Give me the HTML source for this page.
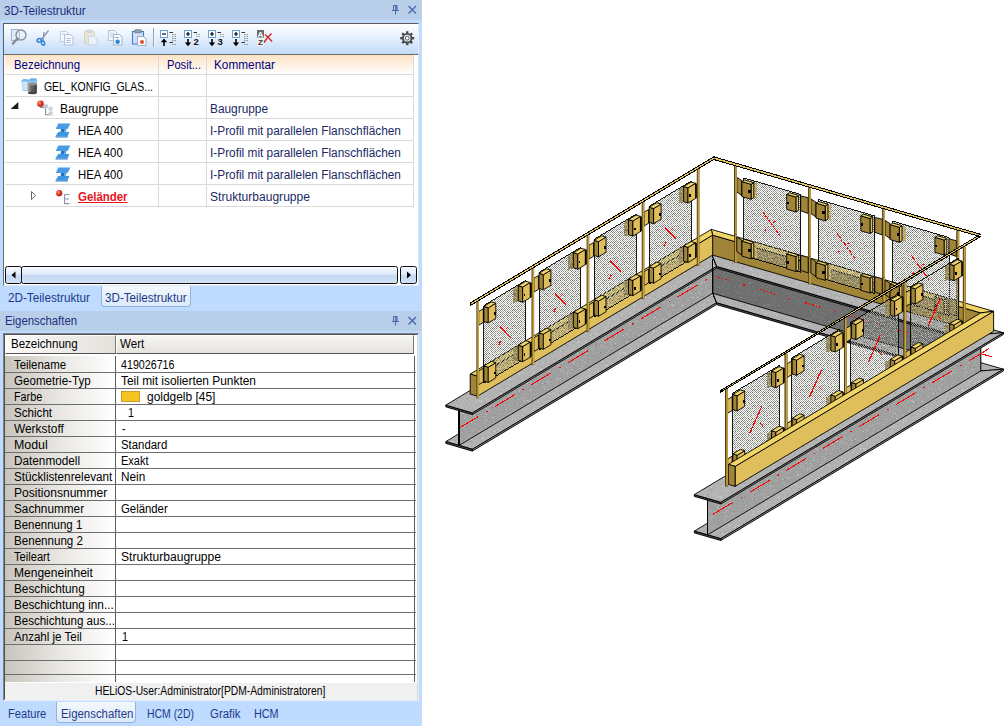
<!DOCTYPE html>
<html><head><meta charset="utf-8">
<style>
*{box-sizing:border-box;margin:0;padding:0}
html,body{width:1004px;height:726px;overflow:hidden;background:#fff}
body{font-family:"Liberation Sans",sans-serif;font-size:12px;color:#000;position:relative}
.abs{position:absolute}
#left{position:absolute;left:0;top:0;width:422px;height:726px;background:#bfdbff}
.tbar{position:absolute;left:0;width:422px;height:20px;background:#b9cee9;color:#1c2f80;font-size:12.2px;line-height:19px;padding-left:4px;white-space:nowrap}
.t{position:absolute;white-space:nowrap;line-height:14px;transform-origin:0 0}
.nv{color:#000080}
.dk{color:#1a2a66}
.hl{position:absolute;height:1px;background:#d9d9d9}
.vl{position:absolute;width:1px;background:#d9d9d9}
.gl{position:absolute;height:1px;background:#6e6e6e;left:5px;width:411px}
.pr{position:absolute;left:13px;font-size:12px;line-height:14px;white-space:nowrap;transform-origin:0 0;transform:scaleX(.93)}
.pv{position:absolute;left:121px;font-size:12px;line-height:14px;white-space:nowrap;transform-origin:0 0;transform:scaleX(.93)}
.tab{position:absolute;font-size:12px;line-height:14px;color:#1c3a8c;white-space:nowrap;transform-origin:0 0;transform:scaleX(.95)}
svg{position:absolute;left:0;top:0}
</style></head><body>
<div id="left">
<div class="abs" style="left:0;top:0;width:422px;height:1px;background:#d3e3f6"></div>
<div class="tbar" style="top:0"></div>
<div class="tbar" style="top:311px"></div>
<div class="t" style="left:4px;top:3.6px;color:#1c2f80;transform:scaleX(0.970);">3D-Teilestruktur</div>
<div class="t" style="left:4.5px;top:314px;color:#1c2f80;transform:scaleX(0.947);">Eigenschaften</div>
<svg class="abs" style="left:388px;top:0px" width="34" height="20" viewBox="0 0 34 20"><g fill="none" stroke="#4668b0" stroke-width="1.1"><path d="M5.5 5.5h3.5v5h-3.5z" stroke-width="1"/><path d="M8 5.5v5" stroke-width="1.6"/><path d="M4 10.5h7M7.5 10.5v4" stroke-width="1"/><path d="M20.5 6l7.5 7.5M28 6l-7.5 7.5" stroke-width="1.4"/></g></svg>
<svg class="abs" style="left:388px;top:311px" width="34" height="20" viewBox="0 0 34 20"><g fill="none" stroke="#4668b0" stroke-width="1.1"><path d="M5.5 5.5h3.5v5h-3.5z" stroke-width="1"/><path d="M8 5.5v5" stroke-width="1.6"/><path d="M4 10.5h7M7.5 10.5v4" stroke-width="1"/><path d="M20.5 6l7.5 7.5M28 6l-7.5 7.5" stroke-width="1.4"/></g></svg>
<div class="abs" style="left:3px;top:23px;width:416px;height:32px;border:1px solid #5a5a5a;border-right-color:#e8eef8;background:linear-gradient(#ffffff 0%,#eef5fe 30%,#c3dbf7 100%)"></div>
<div class="abs" style="left:3px;top:54px;width:416px;height:232px;background:#fff;border:1px solid #6a6a6a;border-right-color:#dfe8f4;border-bottom-color:#dfe8f4"></div>
<div class="abs" style="left:5px;top:55px;width:409px;height:19px;background:linear-gradient(#fde3c6 0%,#fef0e0 50%,#ffffff 100%)"></div>
<div class="hl" style="left:5px;top:74px;width:409px"></div>
<div class="hl" style="left:5px;top:96px;width:409px"></div>
<div class="hl" style="left:5px;top:118px;width:409px"></div>
<div class="hl" style="left:5px;top:140px;width:409px"></div>
<div class="hl" style="left:5px;top:162px;width:409px"></div>
<div class="hl" style="left:5px;top:184px;width:409px"></div>
<div class="hl" style="left:5px;top:206px;width:409px"></div>
<div class="vl" style="left:158px;top:56px;height:152px"></div>
<div class="vl" style="left:206px;top:56px;height:152px"></div>
<div class="vl" style="left:413px;top:56px;height:152px"></div>
<div class="t" style="left:14.4px;top:58px;color:#000080;transform:scaleX(0.951);">Bezeichnung</div>
<div class="t" style="left:166.9px;top:58px;color:#000080;transform:scaleX(0.927);">Posit...</div>
<div class="t" style="left:214.4px;top:58px;color:#000080;transform:scaleX(0.983);">Kommentar</div>
<div class="t" style="left:44.1px;top:80px;color:#000;transform:scaleX(0.869);">GEL_KONFIG_GLAS...</div>
<div class="t" style="left:60.1px;top:102px;color:#000;transform:scaleX(0.995);">Baugruppe</div>
<div class="t" style="left:210.2px;top:102px;color:#1a2a66;transform:scaleX(0.988);">Baugruppe</div>
<div class="t" style="left:78.3px;top:124px;color:#000;transform:scaleX(0.944);">HEA 400</div>
<div class="t" style="left:210px;top:124px;color:#1a2a66;transform:scaleX(0.987);">I-Profil mit parallelen Flanschflächen</div>
<div class="t" style="left:78.3px;top:146px;color:#000;transform:scaleX(0.944);">HEA 400</div>
<div class="t" style="left:210px;top:146px;color:#1a2a66;transform:scaleX(0.987);">I-Profil mit parallelen Flanschflächen</div>
<div class="t" style="left:78.3px;top:168px;color:#000;transform:scaleX(0.944);">HEA 400</div>
<div class="t" style="left:210px;top:168px;color:#1a2a66;transform:scaleX(0.987);">I-Profil mit parallelen Flanschflächen</div>
<div class="t" style="left:77.6px;top:190px;color:#e8141c;transform:scaleX(0.953);font-weight:bold;text-decoration:underline;">Geländer</div>
<div class="t" style="left:210px;top:190px;color:#1a2a66;transform:scaleX(1.006);">Strukturbaugruppe</div>
<svg class="abs" style="left:0px;top:98px" width="30" height="22"><path d="M18.3 4v7h-7.6z" fill="#1a1a1a"/></svg>
<svg class="abs" style="left:25px;top:186px" width="20" height="22"><path d="M6.5 5.5l4 4l-4 4z" fill="#fff" stroke="#666" stroke-width="1"/></svg>
<div class="abs" style="left:5px;top:266px;width:17px;height:18px;border:1px solid #111;border-radius:2.5px;background:linear-gradient(#f6f9fe,#dfeafa 45%,#c4d8f2 55%,#d3e2f6)"></div>
<div class="abs" style="left:21px;top:266px;width:377px;height:18px;border:1px solid #111;border-radius:2.5px;background:linear-gradient(#f6f9fe,#dfeafa 45%,#c4d8f2 55%,#d3e2f6)"></div>
<div class="abs" style="left:400px;top:266px;width:17px;height:18px;border:1px solid #111;border-radius:2.5px;background:linear-gradient(#f6f9fe,#dfeafa 45%,#c4d8f2 55%,#d3e2f6)"></div>
<svg class="abs" style="left:5px;top:266px" width="412" height="18"><path d="M10.5 5.5v7l-4-3.5z" fill="#000"/><path d="M402 5.5v7l4-3.5z" fill="#000"/></svg>
<div class="abs" style="left:101px;top:286px;width:90px;height:21px;background:linear-gradient(#f4f8fd,#dde9f8);border:1px solid #8fb4e3;border-top:none;border-radius:0 0 4px 4px"></div>
<div class="t" style="left:8px;top:290.5px;color:#1c3a8c;transform:scaleX(0.976);">2D-Teilestruktur</div>
<div class="t" style="left:104.5px;top:290.5px;color:#1c3a8c;transform:scaleX(0.970);">3D-Teilestruktur</div>
<div class="abs" style="left:3px;top:333px;width:416px;height:368px;background:#fff;border:1px solid #828282;border-right-color:#e6eefa;border-bottom-color:#e6eefa"></div>
<div class="abs" style="left:4px;top:334px;width:414px;height:366px;border:1px solid #505050;border-right-color:#d6d6d6;border-bottom-color:#d6d6d6"></div>
<div class="abs" style="left:5px;top:335px;width:111px;height:19px;background:linear-gradient(90deg,#fbfaf9,#e4e1dc);border:1px solid;border-color:#fff #777 #555 #fff"></div>
<div class="abs" style="left:116px;top:335px;width:298px;height:19px;background:linear-gradient(#f6f5f3,#e6e3de);border:1px solid;border-color:#fff #777 #555 #fff"></div>
<div class="t" style="left:10.6px;top:337px;color:#000;transform:scaleX(0.960);">Bezeichnung</div>
<div class="t" style="left:120.2px;top:337px;color:#000;transform:scaleX(0.963);">Wert</div>
<div class="abs" style="left:5px;top:356px;width:110px;height:326px;background:linear-gradient(90deg,#c9c5bd 0%,#e9e7e3 50%,#ffffff 100%)"></div>
<div class="abs" style="left:115px;top:356px;width:1px;height:326px;background:#5c5c5c"></div>
<div class="abs" style="left:414px;top:356px;width:1px;height:326px;background:#5c5c5c"></div>
<div class="gl" style="top:372px"></div>
<div class="t" style="left:13.7px;top:358px;color:#000;transform:scaleX(0.951);">Teilename</div>
<div class="t" style="left:121.3px;top:358px;color:#000;transform:scaleX(0.891);">419026716</div>
<div class="gl" style="top:388px"></div>
<div class="t" style="left:13.7px;top:374px;color:#000;transform:scaleX(0.966);">Geometrie-Typ</div>
<div class="t" style="left:121.3px;top:374px;color:#000;transform:scaleX(0.992);">Teil mit isolierten Punkten</div>
<div class="gl" style="top:404px"></div>
<div class="t" style="left:13.7px;top:390px;color:#000;transform:scaleX(0.899);">Farbe</div>
<div class="abs" style="left:121px;top:391px;width:19px;height:11px;background:#f7c321;border:1px solid #c8a030"></div>
<div class="t" style="left:146.6px;top:390px;color:#000;transform:scaleX(0.995);">goldgelb [45]</div>
<div class="gl" style="top:420px"></div>
<div class="t" style="left:13.7px;top:406px;color:#000;transform:scaleX(0.968);">Schicht</div>
<div class="t" style="left:127.5px;top:406px;color:#000;transform:scaleX(0.897);">1</div>
<div class="gl" style="top:436px"></div>
<div class="t" style="left:13.7px;top:422px;color:#000;transform:scaleX(0.991);">Werkstoff</div>
<div class="t" style="left:122px;top:422px;color:#000;transform:scaleX(0.875);">-</div>
<div class="gl" style="top:452px"></div>
<div class="t" style="left:13.7px;top:438px;color:#000;transform:scaleX(1.031);">Modul</div>
<div class="t" style="left:121.3px;top:438px;color:#000;transform:scaleX(0.949);">Standard</div>
<div class="gl" style="top:468px"></div>
<div class="t" style="left:13.7px;top:454px;color:#000;transform:scaleX(0.981);">Datenmodell</div>
<div class="t" style="left:121.3px;top:454px;color:#000;transform:scaleX(0.916);">Exakt</div>
<div class="gl" style="top:484px"></div>
<div class="t" style="left:13.7px;top:470px;color:#000;transform:scaleX(0.976);">Stücklistenrelevant</div>
<div class="t" style="left:121.3px;top:470px;color:#000;transform:scaleX(0.980);">Nein</div>
<div class="gl" style="top:500px"></div>
<div class="t" style="left:13.7px;top:486px;color:#000;transform:scaleX(1.005);">Positionsnummer</div>
<div class="gl" style="top:516px"></div>
<div class="t" style="left:13.7px;top:502px;color:#000;transform:scaleX(0.982);">Sachnummer</div>
<div class="t" style="left:121.3px;top:502px;color:#000;transform:scaleX(0.946);">Geländer</div>
<div class="gl" style="top:532px"></div>
<div class="t" style="left:13.7px;top:518px;color:#000;transform:scaleX(0.956);">Benennung 1</div>
<div class="gl" style="top:548px"></div>
<div class="t" style="left:13.7px;top:534px;color:#000;transform:scaleX(0.966);">Benennung 2</div>
<div class="gl" style="top:564px"></div>
<div class="t" style="left:13.7px;top:550px;color:#000;transform:scaleX(0.928);">Teileart</div>
<div class="t" style="left:121.3px;top:550px;color:#000;transform:scaleX(1.006);">Strukturbaugruppe</div>
<div class="gl" style="top:580px"></div>
<div class="t" style="left:13.7px;top:566px;color:#000;transform:scaleX(1.002);">Mengeneinheit</div>
<div class="gl" style="top:596px"></div>
<div class="t" style="left:13.7px;top:582px;color:#000;transform:scaleX(0.981);">Beschichtung</div>
<div class="gl" style="top:612px"></div>
<div class="t" style="left:13.7px;top:598px;color:#000;transform:scaleX(0.984);">Beschichtung inn...</div>
<div class="gl" style="top:628px"></div>
<div class="t" style="left:13.7px;top:614px;color:#000;transform:scaleX(0.963);">Beschichtung aus...</div>
<div class="gl" style="top:644px"></div>
<div class="t" style="left:13.7px;top:630px;color:#000;transform:scaleX(0.963);">Anzahl je Teil</div>
<div class="t" style="left:121.5px;top:630px;color:#000;transform:scaleX(0.897);">1</div>
<div class="gl" style="top:660px"></div>
<div class="gl" style="top:674px"></div>
<div class="abs" style="left:5px;top:682px;width:412px;height:18px;background:#f0f0f0;border-top:1px solid #fff"></div>
<div class="t" style="left:95.2px;top:684px;color:#000;transform:scaleX(0.859);">HELiOS-User:Administrator[PDM-Administratoren]</div>
<div class="abs" style="left:56px;top:702px;width:80px;height:21px;background:linear-gradient(#f4f8fd,#dde9f8);border:1px solid #8fb4e3;border-top:none;border-radius:0 0 4px 4px"></div>
<div class="t" style="left:8.4px;top:707px;color:#1c3a8c;transform:scaleX(0.926);">Feature</div>
<div class="t" style="left:60.5px;top:707px;color:#1c3a8c;transform:scaleX(0.951);">Eigenschaften</div>
<div class="t" style="left:146.5px;top:707px;color:#1c3a8c;transform:scaleX(0.869);">HCM (2D)</div>
<div class="t" style="left:210px;top:707px;color:#1c3a8c;transform:scaleX(0.953);">Grafik</div>
<div class="t" style="left:254.1px;top:707px;color:#1c3a8c;transform:scaleX(0.900);">HCM</div>
</div><svg width="422" height="726" viewBox="0 0 422 726" style="position:absolute;left:0;top:0"><defs><linearGradient id="ib" x1="0" y1="0" x2="1" y2="1"><stop offset="0" stop-color="#5aa6e6"/><stop offset="1" stop-color="#2b7fcf"/></linearGradient><radialGradient id="rb" cx=".35" cy=".35" r=".7"><stop offset="0" stop-color="#ff9a80"/><stop offset=".5" stop-color="#e03a28"/><stop offset="1" stop-color="#a81810"/></radialGradient></defs><g transform="translate(11,29)"><rect x="0.5" y="0.5" width="7" height="11" fill="#dfe9f8" stroke="#8fa6c8" stroke-width=".8"/><circle cx="10" cy="6" r="5" fill="#e6f0fc" fill-opacity=".8" stroke="#8b8f96" stroke-width="1.4"/><path d="M6.5 9.5L1.8 14.8" stroke="#85888e" stroke-width="2.2" stroke-linecap="round"/><path d="M8.5 3v8" stroke="#9db4d8" stroke-width=".8"/></g><g transform="translate(35,29)" fill="none"><path d="M13.5 1.5L6 11M9 3L8 12.5" stroke="#8d98a8" stroke-width="1.3"/><ellipse cx="4.2" cy="11.3" rx="2.2" ry="1.7" stroke="#2f86d8" stroke-width="1.5" transform="rotate(-25 4.2 11.3)"/><ellipse cx="8" cy="14" rx="1.6" ry="2.1" stroke="#2f86d8" stroke-width="1.5" transform="rotate(-15 8 14)"/></g><g transform="translate(59,29)" opacity=".95"><path d="M1.5 2.5h6l2 2v8h-8z" fill="#f4f7fc" stroke="#b9c6dc" stroke-width=".9"/><path d="M5.5 5.5h6l2.5 2.5v8h-8.5z" fill="#f8fafe" stroke="#a9b9d4" stroke-width=".9"/><path d="M7.5 9.5h4M7.5 11.5h4M7.5 13.5h4" stroke="#9bb3da" stroke-width=".9"/><path d="M3 5h3" stroke="#b5c6e2" stroke-width=".8"/></g><g transform="translate(83,29)" opacity=".7"><rect x="1.5" y="2.5" width="10" height="12" fill="#eadfc4" stroke="#d6c8a6" stroke-width=".9"/><rect x="4" y="1" width="5" height="2.6" fill="#c9cfd8" stroke="#b4bcc8" stroke-width=".6"/><path d="M5.5 7.5h6l2.5 2.5v6h-8.5z" fill="#f1f5fb" stroke="#bcc9de" stroke-width=".9"/></g><g transform="translate(107,29)"><path d="M1.5 1.5h6l2 2v8h-8z" fill="#f4f7fc" stroke="#aab9d2" stroke-width=".9"/><path d="M3 4h4M3 6h4M3 8h4" stroke="#b5c6e2" stroke-width=".8"/><path d="M6.5 5.5h6l2.5 2.5v8h-8.5z" fill="#f8fafe" stroke="#98aac8" stroke-width=".9"/><path d="M8.5 8.5h3" stroke="#6f97d4" stroke-width="1"/><circle cx="10.6" cy="12.8" r="2.3" fill="#2a86d6"/></g><g transform="translate(131,29)"><rect x="1.5" y="2.5" width="11" height="12.5" fill="#cfe0f8" stroke="#3f7fd0" stroke-width="1.1"/><rect x="4" y="0.8" width="6" height="3" fill="#9aa0aa" stroke="#6e747e" stroke-width=".7"/><path d="M6.5 7.5h6l2.5 2.5v6.5h-8.5z" fill="#fdfdfd" stroke="#9aa6ba" stroke-width=".9"/><circle cx="11" cy="13" r="2" fill="#e05030"/></g><path d="M153.5 28v19" stroke="#9aa3b5" stroke-width="1"/><path d="M154.5 28v19" stroke="#f4f8fd" stroke-width="1"/><g transform="translate(160,30)"><rect x="0.5" y="0.5" width="7" height="7" fill="#fff" stroke="#6aa0dc" stroke-width="1"/><path d="M2 4h4" stroke="#000" stroke-width="1.2"/><path d="M4 16V10" stroke="#000" stroke-width="1.6"/><path d="M0.8 12.2L4 8.6L7.2 12.2z" fill="#000"/><path d="M9.5 2.5h3.5M9.5 12.5h3.5" stroke="#333" stroke-width="1"/><path d="M12 4.5h4.5M12 6.5h4.5M12 8.5h4.5M12 10.5h4.5M12 14.5h4.5" stroke="#7f9a8c" stroke-width="1" stroke-dasharray="1.5 1"/></g><g transform="translate(184,30)"><rect x="0.5" y="0.5" width="7" height="7" fill="#fff" stroke="#6aa0dc" stroke-width="1"/><path d="M2 4h4M4 2v4" stroke="#000" stroke-width="1.2"/><path d="M4 9v5" stroke="#000" stroke-width="1.6"/><path d="M0.8 12.4L4 16.2L7.2 12.4z" fill="#000"/><path d="M9.5 2.5h3.5" stroke="#333" stroke-width="1"/><path d="M12 4.5h4.5M12 6.5h4.5" stroke="#8fa89c" stroke-width="1" stroke-dasharray="1.5 1"/><text x="9.5" y="15" font-family="Liberation Sans" font-weight="bold" font-size="9.5" fill="#111">2</text></g><g transform="translate(208,30)"><rect x="0.5" y="0.5" width="7" height="7" fill="#fff" stroke="#6aa0dc" stroke-width="1"/><path d="M2 4h4M4 2v4" stroke="#000" stroke-width="1.2"/><path d="M4 9v5" stroke="#000" stroke-width="1.6"/><path d="M0.8 12.4L4 16.2L7.2 12.4z" fill="#000"/><path d="M9.5 2.5h3.5" stroke="#333" stroke-width="1"/><path d="M12 4.5h4.5M12 6.5h4.5" stroke="#8fa89c" stroke-width="1" stroke-dasharray="1.5 1"/><text x="9.5" y="15" font-family="Liberation Sans" font-weight="bold" font-size="9.5" fill="#111">3</text></g><g transform="translate(232,30)"><rect x="0.5" y="0.5" width="7" height="7" fill="#fff" stroke="#6aa0dc" stroke-width="1"/><path d="M2 4h4M4 2v4" stroke="#000" stroke-width="1.2"/><path d="M4 9v5" stroke="#000" stroke-width="1.6"/><path d="M0.8 12.4L4 16.2L7.2 12.4z" fill="#000"/><path d="M9.5 2.5h3.5M9.5 12.5h3.5" stroke="#333" stroke-width="1"/><path d="M12 4.5h4.5M12 6.5h4.5M12 8.5h4.5M12 10.5h4.5M12 14.5h4.5" stroke="#7f9a8c" stroke-width="1" stroke-dasharray="1.5 1"/></g><g transform="translate(257,30)"><rect x="0" y="0" width="7" height="7.5" fill="#6a6a6a"/><text x="0.6" y="6.6" font-family="Liberation Sans" font-weight="bold" font-size="8" fill="#fff">A</text><rect x="0" y="8.5" width="7" height="7.5" fill="#f2f2f2"/><text x="0.9" y="15.4" font-family="Liberation Sans" font-weight="bold" font-size="8" fill="#333">Z</text><path d="M7 12.5C9 9 11 6.5 14.5 3.5M8 4.5C10.5 6.5 12.5 8.5 15 11.5" stroke="#d8282c" stroke-width="1.6" fill="none"/></g><g transform="translate(407.2,38.2)"><circle r="4.3" fill="none" stroke="#4a4a4a" stroke-width="1.9"/><rect x="-1.2" y="-7" width="2.4" height="2.4" fill="#4a4a4a" transform="rotate(0)"/><rect x="-1.2" y="-7" width="2.4" height="2.4" fill="#4a4a4a" transform="rotate(45)"/><rect x="-1.2" y="-7" width="2.4" height="2.4" fill="#4a4a4a" transform="rotate(90)"/><rect x="-1.2" y="-7" width="2.4" height="2.4" fill="#4a4a4a" transform="rotate(135)"/><rect x="-1.2" y="-7" width="2.4" height="2.4" fill="#4a4a4a" transform="rotate(180)"/><rect x="-1.2" y="-7" width="2.4" height="2.4" fill="#4a4a4a" transform="rotate(225)"/><rect x="-1.2" y="-7" width="2.4" height="2.4" fill="#4a4a4a" transform="rotate(270)"/><rect x="-1.2" y="-7" width="2.4" height="2.4" fill="#4a4a4a" transform="rotate(315)"/><circle r="1.9" fill="#fff" stroke="#4a4a4a" stroke-width=".9"/></g><defs><linearGradient id="cy" x1="0" x2="1"><stop offset="0" stop-color="#a9a9a9"/><stop offset=".35" stop-color="#6a6a6a"/><stop offset="1" stop-color="#3c3c3c"/></linearGradient><linearGradient id="fo" x1="0" y1="0" x2="0" y2="1"><stop offset="0" stop-color="#5aa6e4"/><stop offset=".4" stop-color="#a8d0f0"/><stop offset="1" stop-color="#8cc0ec"/></linearGradient></defs><g transform="translate(21,78)"><path d="M0.3 2.6l2.2-1.6 6 .6 1.6-1.4 5.4 .2.6 2.2v9l-5 1.8-9.6-.6z" fill="url(#fo)"/><path d="M1.2 3.6l5 .4v8.4l-4.4-.4z" fill="#d6e8f7" opacity=".85"/><rect x="7" y="6" width="8.8" height="9" fill="url(#cy)"/><ellipse cx="11.4" cy="15" rx="4.4" ry="1.2" fill="#454545"/><ellipse cx="11.4" cy="6" rx="4.4" ry="1.5" fill="#8d8d8d"/></g><g transform="translate(37,100)"><path d="M3.6 5.4v2.2h5M8.6 7.6v7.2h4" stroke="#6f8ba8" stroke-width="1" fill="none"/><circle cx="8.9" cy="6.3" r="2.2" fill="#c4c7cc"/><circle cx="13.6" cy="8.7" r="2.3" fill="#cfd2d6"/><circle cx="13.6" cy="13.4" r="2.2" fill="#c9ccd1"/><circle cx="3.5" cy="3.8" r="3.3" fill="url(#rb)"/></g><g transform="translate(55.4,122.5)"><path d="M2.8 0.9h12.2l-2.8 5.6h-11.8z" fill="#4a9de4"/><path d="M5.6 6.5h3.8l-.4 3.2h-3.8z" fill="#2273c4"/><path d="M9.4 6.5l1.6 0-.4 2.9h-1.6z" fill="#5aaaea"/><path d="M2.9 9.4h11.1l-1.8 4.7h-12.2z" fill="#3f96e0"/><path d="M0 14.1h12.2l.3 .8h-12z" fill="#2a78c6"/></g><g transform="translate(55.4,144.5)"><path d="M2.8 0.9h12.2l-2.8 5.6h-11.8z" fill="#4a9de4"/><path d="M5.6 6.5h3.8l-.4 3.2h-3.8z" fill="#2273c4"/><path d="M9.4 6.5l1.6 0-.4 2.9h-1.6z" fill="#5aaaea"/><path d="M2.9 9.4h11.1l-1.8 4.7h-12.2z" fill="#3f96e0"/><path d="M0 14.1h12.2l.3 .8h-12z" fill="#2a78c6"/></g><g transform="translate(55.4,166.5)"><path d="M2.8 0.9h12.2l-2.8 5.6h-11.8z" fill="#4a9de4"/><path d="M5.6 6.5h3.8l-.4 3.2h-3.8z" fill="#2273c4"/><path d="M9.4 6.5l1.6 0-.4 2.9h-1.6z" fill="#5aaaea"/><path d="M2.9 9.4h11.1l-1.8 4.7h-12.2z" fill="#3f96e0"/><path d="M0 14.1h12.2l.3 .8h-12z" fill="#2a78c6"/></g><g transform="translate(55,189)"><path d="M9.5 5.5v9.5M9.5 5.5h5M9.5 10h4.5M9.5 14.6h5" stroke="#8a93ab" stroke-width="1.1" fill="none"/><circle cx="4.2" cy="4.2" r="3.1" fill="url(#rb)"/></g></svg><svg width="1004" height="726" viewBox="0 0 1004 726" style="position:absolute;left:0;top:0" shape-rendering="crispEdges">
<defs><g id="spk" shape-rendering="crispEdges"><rect x="20" y="9" width="1" height="1" fill="#fff" fill-opacity="0.3"/><rect x="41" y="3" width="1" height="1" fill="#fff" fill-opacity="0.1"/><rect x="34" y="6" width="1" height="1" fill="#fff" fill-opacity="0.22"/><rect x="37" y="3" width="1" height="1" fill="#fff" fill-opacity="0.15"/><rect x="2" y="5" width="1" height="1" fill="#fff" fill-opacity="0.3"/><rect x="26" y="4" width="1" height="1" fill="#fff" fill-opacity="0.15"/><rect x="5" y="35" width="1" height="1" fill="#fff" fill-opacity="0.3"/><rect x="3" y="36" width="1" height="1" fill="#fff" fill-opacity="0.1"/><rect x="14" y="40" width="1" height="1" fill="#fff" fill-opacity="0.08"/><rect x="36" y="37" width="1" height="1" fill="#fff" fill-opacity="0.3"/><rect x="3" y="14" width="1" height="1" fill="#fff" fill-opacity="0.08"/><rect x="35" y="8" width="1" height="1" fill="#fff" fill-opacity="0.18"/><rect x="26" y="9" width="1" height="1" fill="#fff" fill-opacity="0.1"/><rect x="36" y="19" width="1" height="1" fill="#fff" fill-opacity="0.12"/><rect x="6" y="37" width="1" height="1" fill="#fff" fill-opacity="0.15"/><rect x="23" y="6" width="1" height="1" fill="#fff" fill-opacity="0.1"/><rect x="36" y="3" width="1" height="1" fill="#fff" fill-opacity="0.15"/><rect x="31" y="43" width="1" height="1" fill="#fff" fill-opacity="0.3"/><rect x="20" y="29" width="1" height="1" fill="#fff" fill-opacity="0.42"/><rect x="23" y="19" width="1" height="1" fill="#fff" fill-opacity="0.15"/><rect x="11" y="44" width="1" height="1" fill="#fff" fill-opacity="0.15"/><rect x="5" y="36" width="1" height="1" fill="#fff" fill-opacity="0.18"/><rect x="33" y="31" width="1" height="1" fill="#fff" fill-opacity="0.22"/><rect x="46" y="28" width="1" height="1" fill="#fff" fill-opacity="0.18"/><rect x="38" y="4" width="1" height="1" fill="#fff" fill-opacity="0.1"/><rect x="32" y="26" width="1" height="1" fill="#fff" fill-opacity="0.12"/><rect x="21" y="9" width="1" height="1" fill="#fff" fill-opacity="0.42"/><rect x="26" y="2" width="1" height="1" fill="#fff" fill-opacity="0.1"/><rect x="35" y="36" width="1" height="1" fill="#fff" fill-opacity="0.22"/><rect x="21" y="44" width="1" height="1" fill="#fff" fill-opacity="0.22"/><rect x="38" y="31" width="1" height="1" fill="#fff" fill-opacity="0.42"/><rect x="4" y="5" width="1" height="1" fill="#fff" fill-opacity="0.18"/><rect x="30" y="44" width="1" height="1" fill="#fff" fill-opacity="0.1"/><rect x="3" y="46" width="1" height="1" fill="#fff" fill-opacity="0.18"/><rect x="41" y="36" width="1" height="1" fill="#fff" fill-opacity="0.42"/><rect x="18" y="45" width="1" height="1" fill="#fff" fill-opacity="0.3"/><rect x="42" y="22" width="1" height="1" fill="#fff" fill-opacity="0.08"/><rect x="29" y="22" width="1" height="1" fill="#fff" fill-opacity="0.12"/><rect x="39" y="7" width="1" height="1" fill="#fff" fill-opacity="0.42"/><rect x="3" y="13" width="1" height="1" fill="#fff" fill-opacity="0.18"/><rect x="8" y="47" width="1" height="1" fill="#fff" fill-opacity="0.15"/><rect x="25" y="25" width="1" height="1" fill="#fff" fill-opacity="0.42"/><rect x="5" y="10" width="1" height="1" fill="#fff" fill-opacity="0.42"/><rect x="25" y="35" width="1" height="1" fill="#fff" fill-opacity="0.18"/><rect x="8" y="27" width="1" height="1" fill="#fff" fill-opacity="0.18"/><rect x="45" y="26" width="1" height="1" fill="#fff" fill-opacity="0.22"/><rect x="43" y="24" width="1" height="1" fill="#fff" fill-opacity="0.15"/><rect x="9" y="5" width="1" height="1" fill="#fff" fill-opacity="0.12"/><rect x="9" y="14" width="1" height="1" fill="#fff" fill-opacity="0.15"/><rect x="0" y="31" width="1" height="1" fill="#fff" fill-opacity="0.12"/><rect x="16" y="18" width="1" height="1" fill="#fff" fill-opacity="0.08"/><rect x="9" y="26" width="1" height="1" fill="#fff" fill-opacity="0.22"/><rect x="39" y="36" width="1" height="1" fill="#fff" fill-opacity="0.22"/><rect x="8" y="44" width="1" height="1" fill="#fff" fill-opacity="0.08"/><rect x="29" y="43" width="1" height="1" fill="#fff" fill-opacity="0.3"/><rect x="25" y="25" width="1" height="1" fill="#fff" fill-opacity="0.3"/><rect x="6" y="30" width="1" height="1" fill="#fff" fill-opacity="0.3"/><rect x="3" y="12" width="1" height="1" fill="#fff" fill-opacity="0.1"/><rect x="13" y="28" width="1" height="1" fill="#fff" fill-opacity="0.12"/><rect x="7" y="21" width="1" height="1" fill="#fff" fill-opacity="0.08"/><rect x="6" y="0" width="1" height="1" fill="#fff" fill-opacity="0.12"/><rect x="34" y="6" width="1" height="1" fill="#fff" fill-opacity="0.22"/><rect x="39" y="1" width="1" height="1" fill="#fff" fill-opacity="0.1"/><rect x="13" y="39" width="1" height="1" fill="#fff" fill-opacity="0.3"/><rect x="9" y="40" width="1" height="1" fill="#fff" fill-opacity="0.18"/><rect x="22" y="38" width="1" height="1" fill="#fff" fill-opacity="0.22"/><rect x="30" y="7" width="1" height="1" fill="#fff" fill-opacity="0.1"/><rect x="31" y="29" width="1" height="1" fill="#fff" fill-opacity="0.42"/><rect x="30" y="19" width="1" height="1" fill="#fff" fill-opacity="0.1"/><rect x="9" y="6" width="1" height="1" fill="#fff" fill-opacity="0.22"/><rect x="47" y="16" width="1" height="1" fill="#fff" fill-opacity="0.42"/><rect x="44" y="10" width="1" height="1" fill="#fff" fill-opacity="0.08"/><rect x="13" y="33" width="1" height="1" fill="#fff" fill-opacity="0.22"/><rect x="9" y="44" width="1" height="1" fill="#fff" fill-opacity="0.08"/><rect x="33" y="19" width="1" height="1" fill="#fff" fill-opacity="0.1"/><rect x="44" y="16" width="1" height="1" fill="#fff" fill-opacity="0.22"/><rect x="10" y="22" width="1" height="1" fill="#fff" fill-opacity="0.15"/><rect x="34" y="34" width="1" height="1" fill="#fff" fill-opacity="0.22"/><rect x="40" y="14" width="1" height="1" fill="#fff" fill-opacity="0.15"/><rect x="15" y="25" width="1" height="1" fill="#fff" fill-opacity="0.15"/><rect x="12" y="33" width="1" height="1" fill="#fff" fill-opacity="0.42"/><rect x="22" y="46" width="1" height="1" fill="#fff" fill-opacity="0.08"/><rect x="1" y="17" width="1" height="1" fill="#fff" fill-opacity="0.42"/><rect x="16" y="12" width="1" height="1" fill="#fff" fill-opacity="0.22"/><rect x="28" y="46" width="1" height="1" fill="#fff" fill-opacity="0.22"/><rect x="23" y="5" width="1" height="1" fill="#fff" fill-opacity="0.15"/><rect x="6" y="14" width="1" height="1" fill="#fff" fill-opacity="0.42"/><rect x="12" y="21" width="1" height="1" fill="#fff" fill-opacity="0.15"/><rect x="30" y="39" width="1" height="1" fill="#fff" fill-opacity="0.08"/><rect x="30" y="41" width="1" height="1" fill="#fff" fill-opacity="0.22"/><rect x="41" y="5" width="1" height="1" fill="#fff" fill-opacity="0.1"/><rect x="24" y="45" width="1" height="1" fill="#fff" fill-opacity="0.15"/><rect x="30" y="11" width="1" height="1" fill="#fff" fill-opacity="0.3"/><rect x="40" y="21" width="1" height="1" fill="#fff" fill-opacity="0.1"/><rect x="46" y="25" width="1" height="1" fill="#fff" fill-opacity="0.42"/><rect x="25" y="47" width="1" height="1" fill="#fff" fill-opacity="0.1"/><rect x="46" y="10" width="1" height="1" fill="#fff" fill-opacity="0.12"/><rect x="8" y="1" width="1" height="1" fill="#fff" fill-opacity="0.12"/><rect x="37" y="29" width="1" height="1" fill="#fff" fill-opacity="0.12"/><rect x="39" y="38" width="1" height="1" fill="#fff" fill-opacity="0.42"/><rect x="42" y="22" width="1" height="1" fill="#fff" fill-opacity="0.12"/><rect x="35" y="35" width="1" height="1" fill="#fff" fill-opacity="0.12"/><rect x="1" y="0" width="1" height="1" fill="#fff" fill-opacity="0.1"/><rect x="33" y="47" width="1" height="1" fill="#fff" fill-opacity="0.12"/><rect x="27" y="12" width="1" height="1" fill="#fff" fill-opacity="0.15"/><rect x="1" y="16" width="1" height="1" fill="#fff" fill-opacity="0.15"/><rect x="18" y="32" width="1" height="1" fill="#fff" fill-opacity="0.15"/><rect x="37" y="20" width="1" height="1" fill="#fff" fill-opacity="0.18"/><rect x="34" y="26" width="1" height="1" fill="#fff" fill-opacity="0.12"/><rect x="3" y="47" width="1" height="1" fill="#fff" fill-opacity="0.22"/><rect x="29" y="42" width="1" height="1" fill="#fff" fill-opacity="0.3"/><rect x="32" y="8" width="1" height="1" fill="#fff" fill-opacity="0.12"/><rect x="33" y="32" width="1" height="1" fill="#fff" fill-opacity="0.08"/><rect x="28" y="11" width="1" height="1" fill="#fff" fill-opacity="0.08"/><rect x="9" y="11" width="1" height="1" fill="#fff" fill-opacity="0.12"/><rect x="30" y="39" width="1" height="1" fill="#fff" fill-opacity="0.1"/><rect x="35" y="3" width="1" height="1" fill="#fff" fill-opacity="0.22"/><rect x="43" y="33" width="1" height="1" fill="#fff" fill-opacity="0.42"/><rect x="6" y="35" width="1" height="1" fill="#fff" fill-opacity="0.08"/><rect x="15" y="12" width="1" height="1" fill="#fff" fill-opacity="0.18"/><rect x="2" y="6" width="1" height="1" fill="#fff" fill-opacity="0.42"/><rect x="35" y="1" width="1" height="1" fill="#fff" fill-opacity="0.1"/><rect x="28" y="20" width="1" height="1" fill="#fff" fill-opacity="0.15"/><rect x="44" y="17" width="1" height="1" fill="#fff" fill-opacity="0.42"/><rect x="32" y="34" width="1" height="1" fill="#fff" fill-opacity="0.42"/><rect x="32" y="15" width="1" height="1" fill="#fff" fill-opacity="0.18"/><rect x="35" y="12" width="1" height="1" fill="#fff" fill-opacity="0.42"/><rect x="8" y="26" width="1" height="1" fill="#fff" fill-opacity="0.1"/><rect x="25" y="28" width="1" height="1" fill="#fff" fill-opacity="0.22"/><rect x="4" y="42" width="1" height="1" fill="#fff" fill-opacity="0.15"/><rect x="27" y="4" width="1" height="1" fill="#fff" fill-opacity="0.15"/><rect x="42" y="19" width="1" height="1" fill="#fff" fill-opacity="0.1"/><rect x="9" y="45" width="1" height="1" fill="#fff" fill-opacity="0.22"/><rect x="9" y="16" width="1" height="1" fill="#fff" fill-opacity="0.12"/><rect x="29" y="14" width="1" height="1" fill="#fff" fill-opacity="0.1"/><rect x="25" y="31" width="1" height="1" fill="#fff" fill-opacity="0.12"/><rect x="42" y="14" width="1" height="1" fill="#fff" fill-opacity="0.12"/><rect x="45" y="27" width="1" height="1" fill="#fff" fill-opacity="0.3"/><rect x="21" y="26" width="1" height="1" fill="#fff" fill-opacity="0.15"/><rect x="22" y="20" width="1" height="1" fill="#fff" fill-opacity="0.1"/><rect x="46" y="23" width="1" height="1" fill="#fff" fill-opacity="0.08"/><rect x="21" y="35" width="1" height="1" fill="#fff" fill-opacity="0.42"/><rect x="28" y="45" width="1" height="1" fill="#fff" fill-opacity="0.08"/><rect x="24" y="21" width="1" height="1" fill="#fff" fill-opacity="0.18"/><rect x="32" y="4" width="1" height="1" fill="#fff" fill-opacity="0.1"/><rect x="14" y="6" width="1" height="1" fill="#fff" fill-opacity="0.1"/><rect x="16" y="17" width="1" height="1" fill="#fff" fill-opacity="0.08"/><rect x="11" y="17" width="1" height="1" fill="#fff" fill-opacity="0.12"/><rect x="27" y="43" width="1" height="1" fill="#fff" fill-opacity="0.18"/><rect x="25" y="9" width="1" height="1" fill="#fff" fill-opacity="0.42"/><rect x="44" y="20" width="1" height="1" fill="#fff" fill-opacity="0.1"/><rect x="17" y="3" width="1" height="1" fill="#fff" fill-opacity="0.12"/><rect x="27" y="4" width="1" height="1" fill="#fff" fill-opacity="0.18"/><rect x="1" y="40" width="1" height="1" fill="#fff" fill-opacity="0.1"/><rect x="16" y="5" width="1" height="1" fill="#fff" fill-opacity="0.15"/><rect x="4" y="16" width="1" height="1" fill="#fff" fill-opacity="0.1"/><rect x="29" y="0" width="1" height="1" fill="#fff" fill-opacity="0.22"/><rect x="35" y="26" width="1" height="1" fill="#fff" fill-opacity="0.18"/><rect x="39" y="8" width="1" height="1" fill="#fff" fill-opacity="0.08"/><rect x="33" y="45" width="1" height="1" fill="#fff" fill-opacity="0.15"/><rect x="7" y="10" width="1" height="1" fill="#fff" fill-opacity="0.18"/><rect x="3" y="11" width="1" height="1" fill="#fff" fill-opacity="0.15"/><rect x="19" y="40" width="1" height="1" fill="#fff" fill-opacity="0.18"/><rect x="33" y="13" width="1" height="1" fill="#fff" fill-opacity="0.18"/><rect x="28" y="32" width="1" height="1" fill="#fff" fill-opacity="0.12"/><rect x="17" y="22" width="1" height="1" fill="#fff" fill-opacity="0.08"/><rect x="16" y="2" width="1" height="1" fill="#fff" fill-opacity="0.08"/><rect x="1" y="46" width="1" height="1" fill="#fff" fill-opacity="0.15"/><rect x="32" y="30" width="1" height="1" fill="#fff" fill-opacity="0.15"/><rect x="28" y="6" width="1" height="1" fill="#fff" fill-opacity="0.3"/><rect x="42" y="31" width="1" height="1" fill="#fff" fill-opacity="0.3"/><rect x="32" y="19" width="1" height="1" fill="#fff" fill-opacity="0.15"/><rect x="14" y="21" width="1" height="1" fill="#fff" fill-opacity="0.15"/><rect x="45" y="46" width="1" height="1" fill="#fff" fill-opacity="0.12"/><rect x="25" y="22" width="1" height="1" fill="#fff" fill-opacity="0.08"/><rect x="8" y="0" width="1" height="1" fill="#fff" fill-opacity="0.1"/><rect x="40" y="47" width="1" height="1" fill="#fff" fill-opacity="0.18"/><rect x="27" y="10" width="1" height="1" fill="#fff" fill-opacity="0.08"/><rect x="5" y="42" width="1" height="1" fill="#fff" fill-opacity="0.3"/><rect x="32" y="42" width="1" height="1" fill="#fff" fill-opacity="0.18"/><rect x="38" y="15" width="1" height="1" fill="#fff" fill-opacity="0.18"/><rect x="2" y="29" width="1" height="1" fill="#fff" fill-opacity="0.12"/><rect x="10" y="17" width="1" height="1" fill="#fff" fill-opacity="0.42"/><rect x="0" y="16" width="1" height="1" fill="#fff" fill-opacity="0.22"/><rect x="21" y="35" width="1" height="1" fill="#fff" fill-opacity="0.22"/><rect x="15" y="2" width="1" height="1" fill="#fff" fill-opacity="0.18"/><rect x="13" y="22" width="1" height="1" fill="#fff" fill-opacity="0.12"/><rect x="0" y="21" width="1" height="1" fill="#fff" fill-opacity="0.3"/><rect x="5" y="30" width="1" height="1" fill="#fff" fill-opacity="0.18"/><rect x="32" y="41" width="1" height="1" fill="#fff" fill-opacity="0.15"/><rect x="15" y="32" width="1" height="1" fill="#fff" fill-opacity="0.08"/><rect x="5" y="16" width="1" height="1" fill="#fff" fill-opacity="0.1"/><rect x="9" y="25" width="1" height="1" fill="#fff" fill-opacity="0.08"/><rect x="25" y="1" width="1" height="1" fill="#fff" fill-opacity="0.18"/><rect x="19" y="40" width="1" height="1" fill="#fff" fill-opacity="0.15"/><rect x="5" y="37" width="1" height="1" fill="#fff" fill-opacity="0.12"/><rect x="42" y="45" width="1" height="1" fill="#fff" fill-opacity="0.3"/><rect x="20" y="46" width="1" height="1" fill="#fff" fill-opacity="0.42"/><rect x="9" y="18" width="1" height="1" fill="#fff" fill-opacity="0.12"/><rect x="2" y="45" width="1" height="1" fill="#fff" fill-opacity="0.3"/><rect x="46" y="44" width="1" height="1" fill="#fff" fill-opacity="0.12"/><rect x="33" y="32" width="1" height="1" fill="#fff" fill-opacity="0.08"/><rect x="43" y="37" width="1" height="1" fill="#fff" fill-opacity="0.15"/><rect x="5" y="1" width="1" height="1" fill="#fff" fill-opacity="0.08"/><rect x="8" y="40" width="1" height="1" fill="#fff" fill-opacity="0.22"/><rect x="6" y="24" width="1" height="1" fill="#fff" fill-opacity="0.42"/><rect x="35" y="3" width="1" height="1" fill="#fff" fill-opacity="0.08"/><rect x="40" y="34" width="1" height="1" fill="#fff" fill-opacity="0.15"/><rect x="31" y="16" width="1" height="1" fill="#fff" fill-opacity="0.08"/><rect x="29" y="4" width="1" height="1" fill="#fff" fill-opacity="0.1"/><rect x="42" y="33" width="1" height="1" fill="#fff" fill-opacity="0.1"/><rect x="47" y="47" width="1" height="1" fill="#fff" fill-opacity="0.42"/><rect x="16" y="4" width="1" height="1" fill="#fff" fill-opacity="0.18"/><rect x="15" y="46" width="1" height="1" fill="#fff" fill-opacity="0.15"/><rect x="14" y="47" width="1" height="1" fill="#fff" fill-opacity="0.42"/><rect x="31" y="24" width="1" height="1" fill="#fff" fill-opacity="0.1"/><rect x="30" y="43" width="1" height="1" fill="#fff" fill-opacity="0.18"/><rect x="2" y="39" width="1" height="1" fill="#fff" fill-opacity="0.15"/><rect x="4" y="38" width="1" height="1" fill="#fff" fill-opacity="0.12"/><rect x="21" y="16" width="1" height="1" fill="#fff" fill-opacity="0.18"/><rect x="39" y="36" width="1" height="1" fill="#fff" fill-opacity="0.12"/><rect x="0" y="30" width="1" height="1" fill="#fff" fill-opacity="0.08"/><rect x="31" y="17" width="1" height="1" fill="#fff" fill-opacity="0.1"/><rect x="44" y="13" width="1" height="1" fill="#fff" fill-opacity="0.42"/><rect x="18" y="45" width="1" height="1" fill="#fff" fill-opacity="0.18"/><rect x="29" y="29" width="1" height="1" fill="#fff" fill-opacity="0.42"/><rect x="7" y="35" width="1" height="1" fill="#fff" fill-opacity="0.15"/><rect x="19" y="5" width="1" height="1" fill="#fff" fill-opacity="0.42"/><rect x="1" y="18" width="1" height="1" fill="#fff" fill-opacity="0.42"/><rect x="4" y="32" width="1" height="1" fill="#fff" fill-opacity="0.42"/><rect x="17" y="24" width="1" height="1" fill="#000" fill-opacity="0.06"/><rect x="13" y="4" width="1" height="1" fill="#000" fill-opacity="0.04"/><rect x="9" y="47" width="1" height="1" fill="#000" fill-opacity="0.08"/><rect x="23" y="8" width="1" height="1" fill="#000" fill-opacity="0.08"/><rect x="7" y="45" width="1" height="1" fill="#000" fill-opacity="0.08"/><rect x="14" y="31" width="1" height="1" fill="#000" fill-opacity="0.12"/><rect x="25" y="1" width="1" height="1" fill="#000" fill-opacity="0.06"/><rect x="0" y="31" width="1" height="1" fill="#000" fill-opacity="0.12"/><rect x="25" y="19" width="1" height="1" fill="#000" fill-opacity="0.06"/><rect x="26" y="22" width="1" height="1" fill="#000" fill-opacity="0.12"/><rect x="20" y="7" width="1" height="1" fill="#000" fill-opacity="0.08"/><rect x="0" y="20" width="1" height="1" fill="#000" fill-opacity="0.08"/><rect x="25" y="7" width="1" height="1" fill="#000" fill-opacity="0.06"/><rect x="45" y="0" width="1" height="1" fill="#000" fill-opacity="0.08"/><rect x="16" y="23" width="1" height="1" fill="#000" fill-opacity="0.04"/><rect x="25" y="24" width="1" height="1" fill="#000" fill-opacity="0.04"/><rect x="23" y="27" width="1" height="1" fill="#000" fill-opacity="0.08"/><rect x="3" y="17" width="1" height="1" fill="#000" fill-opacity="0.04"/><rect x="3" y="42" width="1" height="1" fill="#000" fill-opacity="0.08"/><rect x="40" y="9" width="1" height="1" fill="#000" fill-opacity="0.06"/><rect x="17" y="27" width="1" height="1" fill="#000" fill-opacity="0.08"/><rect x="12" y="23" width="1" height="1" fill="#000" fill-opacity="0.12"/><rect x="1" y="40" width="1" height="1" fill="#000" fill-opacity="0.12"/><rect x="35" y="35" width="1" height="1" fill="#000" fill-opacity="0.06"/><rect x="46" y="5" width="1" height="1" fill="#000" fill-opacity="0.04"/><rect x="46" y="26" width="1" height="1" fill="#000" fill-opacity="0.12"/><rect x="39" y="8" width="1" height="1" fill="#000" fill-opacity="0.08"/><rect x="31" y="3" width="1" height="1" fill="#000" fill-opacity="0.06"/><rect x="10" y="30" width="1" height="1" fill="#000" fill-opacity="0.12"/><rect x="21" y="18" width="1" height="1" fill="#000" fill-opacity="0.08"/><rect x="16" y="47" width="1" height="1" fill="#000" fill-opacity="0.08"/><rect x="25" y="41" width="1" height="1" fill="#000" fill-opacity="0.06"/><rect x="19" y="30" width="1" height="1" fill="#000" fill-opacity="0.12"/><rect x="7" y="10" width="1" height="1" fill="#000" fill-opacity="0.06"/><rect x="4" y="13" width="1" height="1" fill="#000" fill-opacity="0.12"/><rect x="35" y="14" width="1" height="1" fill="#000" fill-opacity="0.12"/><rect x="21" y="28" width="1" height="1" fill="#000" fill-opacity="0.12"/><rect x="8" y="35" width="1" height="1" fill="#000" fill-opacity="0.06"/><rect x="15" y="5" width="1" height="1" fill="#000" fill-opacity="0.06"/><rect x="21" y="35" width="1" height="1" fill="#000" fill-opacity="0.04"/><rect x="20" y="15" width="1" height="1" fill="#000" fill-opacity="0.08"/><rect x="16" y="36" width="1" height="1" fill="#000" fill-opacity="0.06"/><rect x="1" y="47" width="1" height="1" fill="#000" fill-opacity="0.12"/><rect x="24" y="26" width="1" height="1" fill="#000" fill-opacity="0.06"/><rect x="24" y="17" width="1" height="1" fill="#000" fill-opacity="0.08"/><rect x="3" y="31" width="1" height="1" fill="#000" fill-opacity="0.08"/><rect x="36" y="23" width="1" height="1" fill="#000" fill-opacity="0.06"/><rect x="43" y="32" width="1" height="1" fill="#000" fill-opacity="0.06"/><rect x="5" y="17" width="1" height="1" fill="#000" fill-opacity="0.06"/><rect x="24" y="25" width="1" height="1" fill="#000" fill-opacity="0.12"/><rect x="27" y="19" width="1" height="1" fill="#000" fill-opacity="0.04"/><rect x="8" y="2" width="1" height="1" fill="#000" fill-opacity="0.12"/><rect x="45" y="30" width="1" height="1" fill="#000" fill-opacity="0.12"/><rect x="0" y="4" width="1" height="1" fill="#000" fill-opacity="0.12"/><rect x="33" y="29" width="1" height="1" fill="#000" fill-opacity="0.12"/><rect x="15" y="6" width="1" height="1" fill="#000" fill-opacity="0.06"/><rect x="9" y="9" width="1" height="1" fill="#000" fill-opacity="0.04"/><rect x="46" y="44" width="1" height="1" fill="#000" fill-opacity="0.12"/><rect x="5" y="35" width="1" height="1" fill="#000" fill-opacity="0.04"/><rect x="0" y="8" width="1" height="1" fill="#000" fill-opacity="0.06"/><rect x="36" y="2" width="1" height="1" fill="#000" fill-opacity="0.08"/><rect x="8" y="40" width="1" height="1" fill="#000" fill-opacity="0.08"/><rect x="33" y="40" width="1" height="1" fill="#000" fill-opacity="0.12"/><rect x="44" y="7" width="1" height="1" fill="#000" fill-opacity="0.04"/><rect x="4" y="19" width="1" height="1" fill="#000" fill-opacity="0.06"/><rect x="24" y="16" width="1" height="1" fill="#000" fill-opacity="0.06"/><rect x="38" y="0" width="1" height="1" fill="#000" fill-opacity="0.04"/><rect x="34" y="19" width="1" height="1" fill="#000" fill-opacity="0.12"/><rect x="17" y="20" width="1" height="1" fill="#000" fill-opacity="0.06"/><rect x="30" y="33" width="1" height="1" fill="#000" fill-opacity="0.06"/><rect x="35" y="15" width="1" height="1" fill="#000" fill-opacity="0.04"/><rect x="26" y="45" width="1" height="1" fill="#000" fill-opacity="0.08"/><rect x="3" y="1" width="1" height="1" fill="#000" fill-opacity="0.06"/><rect x="31" y="43" width="1" height="1" fill="#000" fill-opacity="0.12"/><rect x="5" y="16" width="1" height="1" fill="#000" fill-opacity="0.06"/><rect x="42" y="27" width="1" height="1" fill="#000" fill-opacity="0.08"/><rect x="14" y="31" width="1" height="1" fill="#000" fill-opacity="0.04"/><rect x="44" y="21" width="1" height="1" fill="#000" fill-opacity="0.12"/><rect x="23" y="43" width="1" height="1" fill="#000" fill-opacity="0.12"/><rect x="12" y="0" width="1" height="1" fill="#000" fill-opacity="0.08"/><rect x="47" y="32" width="1" height="1" fill="#000" fill-opacity="0.04"/><rect x="13" y="31" width="1" height="1" fill="#000" fill-opacity="0.06"/><rect x="19" y="12" width="1" height="1" fill="#000" fill-opacity="0.06"/><rect x="29" y="14" width="1" height="1" fill="#000" fill-opacity="0.08"/><rect x="18" y="6" width="1" height="1" fill="#000" fill-opacity="0.12"/><rect x="39" y="11" width="1" height="1" fill="#000" fill-opacity="0.06"/><rect x="31" y="26" width="1" height="1" fill="#000" fill-opacity="0.04"/><rect x="38" y="9" width="1" height="1" fill="#000" fill-opacity="0.12"/><rect x="3" y="13" width="1" height="1" fill="#000" fill-opacity="0.04"/><rect x="38" y="9" width="1" height="1" fill="#000" fill-opacity="0.12"/><rect x="3" y="45" width="1" height="1" fill="#000" fill-opacity="0.04"/><rect x="11" y="25" width="1" height="1" fill="#000" fill-opacity="0.12"/><rect x="45" y="20" width="1" height="1" fill="#000" fill-opacity="0.04"/><rect x="5" y="10" width="1" height="1" fill="#000" fill-opacity="0.08"/><rect x="12" y="11" width="1" height="1" fill="#000" fill-opacity="0.12"/><rect x="2" y="19" width="1" height="1" fill="#000" fill-opacity="0.12"/><rect x="23" y="21" width="1" height="1" fill="#000" fill-opacity="0.12"/><rect x="10" y="6" width="1" height="1" fill="#000" fill-opacity="0.04"/><rect x="5" y="17" width="1" height="1" fill="#000" fill-opacity="0.04"/><rect x="22" y="26" width="1" height="1" fill="#000" fill-opacity="0.04"/><rect x="35" y="13" width="1" height="1" fill="#000" fill-opacity="0.12"/><rect x="22" y="19" width="1" height="1" fill="#000" fill-opacity="0.12"/><rect x="5" y="3" width="1" height="1" fill="#000" fill-opacity="0.12"/><rect x="12" y="23" width="1" height="1" fill="#000" fill-opacity="0.12"/><rect x="12" y="20" width="1" height="1" fill="#000" fill-opacity="0.08"/><rect x="47" y="30" width="1" height="1" fill="#000" fill-opacity="0.04"/><rect x="40" y="26" width="1" height="1" fill="#000" fill-opacity="0.06"/><rect x="40" y="25" width="1" height="1" fill="#000" fill-opacity="0.04"/><rect x="24" y="2" width="1" height="1" fill="#000" fill-opacity="0.12"/><rect x="4" y="3" width="1" height="1" fill="#000" fill-opacity="0.08"/><rect x="12" y="47" width="1" height="1" fill="#000" fill-opacity="0.04"/><rect x="38" y="21" width="1" height="1" fill="#000" fill-opacity="0.08"/><rect x="17" y="21" width="1" height="1" fill="#000" fill-opacity="0.04"/><rect x="16" y="47" width="1" height="1" fill="#000" fill-opacity="0.08"/><rect x="17" y="19" width="1" height="1" fill="#000" fill-opacity="0.04"/><rect x="46" y="38" width="1" height="1" fill="#000" fill-opacity="0.04"/><rect x="1" y="14" width="1" height="1" fill="#000" fill-opacity="0.04"/><rect x="30" y="45" width="1" height="1" fill="#000" fill-opacity="0.12"/><rect x="24" y="16" width="1" height="1" fill="#000" fill-opacity="0.12"/><rect x="31" y="8" width="1" height="1" fill="#000" fill-opacity="0.12"/></g><pattern id="gA" width="48" height="48" patternUnits="userSpaceOnUse"><rect width="48" height="48" fill="#b3b3b3"/><use href="#spk" opacity="1"/></pattern><pattern id="gA2" width="48" height="48" patternUnits="userSpaceOnUse"><rect width="48" height="48" fill="#b1b1b1"/><use href="#spk" opacity="1"/></pattern><pattern id="gB" width="48" height="48" patternUnits="userSpaceOnUse"><rect width="48" height="48" fill="#a0a0a0"/><use href="#spk" opacity="1"/></pattern><pattern id="gC" width="48" height="48" patternUnits="userSpaceOnUse"><rect width="48" height="48" fill="#6f6f6f"/><use href="#spk" opacity="0.45"/></pattern><pattern id="glass" width="16" height="16" patternUnits="userSpaceOnUse" shape-rendering="crispEdges"><rect x="0" y="0" width="1" height="1" fill="rgb(190,194,186)"/><rect x="2" y="0" width="1" height="1" fill="rgb(190,194,186)"/><rect x="4" y="0" width="1" height="1" fill="rgb(190,194,186)"/><rect x="6" y="0" width="1" height="1" fill="rgb(150,154,146)"/><rect x="8" y="0" width="1" height="1" fill="rgb(140,144,136)"/><rect x="10" y="0" width="1" height="1" fill="rgb(190,194,186)"/><rect x="12" y="0" width="1" height="1" fill="rgb(140,144,136)"/><rect x="14" y="0" width="1" height="1" fill="rgb(125,129,121)"/><rect x="1" y="1" width="1" height="1" fill="rgb(190,194,186)"/><rect x="3" y="1" width="1" height="1" fill="rgb(155,159,151)"/><rect x="5" y="1" width="1" height="1" fill="rgb(140,144,136)"/><rect x="7" y="1" width="1" height="1" fill="rgb(125,129,121)"/><rect x="9" y="1" width="1" height="1" fill="rgb(105,109,101)"/><rect x="11" y="1" width="1" height="1" fill="rgb(170,174,166)"/><rect x="13" y="1" width="1" height="1" fill="rgb(190,194,186)"/><rect x="15" y="1" width="1" height="1" fill="rgb(140,144,136)"/><rect x="0" y="2" width="1" height="1" fill="rgb(105,109,101)"/><rect x="2" y="2" width="1" height="1" fill="rgb(125,129,121)"/><rect x="4" y="2" width="1" height="1" fill="rgb(105,109,101)"/><rect x="6" y="2" width="1" height="1" fill="rgb(105,109,101)"/><rect x="8" y="2" width="1" height="1" fill="rgb(150,154,146)"/><rect x="10" y="2" width="1" height="1" fill="rgb(150,154,146)"/><rect x="12" y="2" width="1" height="1" fill="rgb(105,109,101)"/><rect x="14" y="2" width="1" height="1" fill="rgb(190,194,186)"/><rect x="1" y="3" width="1" height="1" fill="rgb(160,164,156)"/><rect x="3" y="3" width="1" height="1" fill="rgb(190,194,186)"/><rect x="5" y="3" width="1" height="1" fill="rgb(150,154,146)"/><rect x="7" y="3" width="1" height="1" fill="rgb(150,154,146)"/><rect x="9" y="3" width="1" height="1" fill="rgb(155,159,151)"/><rect x="11" y="3" width="1" height="1" fill="rgb(190,194,186)"/><rect x="13" y="3" width="1" height="1" fill="rgb(105,109,101)"/><rect x="15" y="3" width="1" height="1" fill="rgb(125,129,121)"/><rect x="0" y="4" width="1" height="1" fill="rgb(190,194,186)"/><rect x="2" y="4" width="1" height="1" fill="rgb(155,159,151)"/><rect x="4" y="4" width="1" height="1" fill="rgb(170,174,166)"/><rect x="6" y="4" width="1" height="1" fill="rgb(125,129,121)"/><rect x="8" y="4" width="1" height="1" fill="rgb(155,159,151)"/><rect x="10" y="4" width="1" height="1" fill="rgb(160,164,156)"/><rect x="12" y="4" width="1" height="1" fill="rgb(150,154,146)"/><rect x="14" y="4" width="1" height="1" fill="rgb(155,159,151)"/><rect x="1" y="5" width="1" height="1" fill="rgb(105,109,101)"/><rect x="3" y="5" width="1" height="1" fill="rgb(125,129,121)"/><rect x="5" y="5" width="1" height="1" fill="rgb(125,129,121)"/><rect x="7" y="5" width="1" height="1" fill="rgb(170,174,166)"/><rect x="9" y="5" width="1" height="1" fill="rgb(125,129,121)"/><rect x="11" y="5" width="1" height="1" fill="rgb(155,159,151)"/><rect x="13" y="5" width="1" height="1" fill="rgb(170,174,166)"/><rect x="15" y="5" width="1" height="1" fill="rgb(125,129,121)"/><rect x="0" y="6" width="1" height="1" fill="rgb(105,109,101)"/><rect x="2" y="6" width="1" height="1" fill="rgb(105,109,101)"/><rect x="4" y="6" width="1" height="1" fill="rgb(150,154,146)"/><rect x="6" y="6" width="1" height="1" fill="rgb(150,154,146)"/><rect x="8" y="6" width="1" height="1" fill="rgb(105,109,101)"/><rect x="10" y="6" width="1" height="1" fill="rgb(190,194,186)"/><rect x="12" y="6" width="1" height="1" fill="rgb(170,174,166)"/><rect x="14" y="6" width="1" height="1" fill="rgb(170,174,166)"/><rect x="1" y="7" width="1" height="1" fill="rgb(170,174,166)"/><rect x="3" y="7" width="1" height="1" fill="rgb(125,129,121)"/><rect x="5" y="7" width="1" height="1" fill="rgb(150,154,146)"/><rect x="7" y="7" width="1" height="1" fill="rgb(155,159,151)"/><rect x="9" y="7" width="1" height="1" fill="rgb(160,164,156)"/><rect x="11" y="7" width="1" height="1" fill="rgb(125,129,121)"/><rect x="13" y="7" width="1" height="1" fill="rgb(155,159,151)"/><rect x="15" y="7" width="1" height="1" fill="rgb(160,164,156)"/><rect x="0" y="8" width="1" height="1" fill="rgb(105,109,101)"/><rect x="2" y="8" width="1" height="1" fill="rgb(170,174,166)"/><rect x="4" y="8" width="1" height="1" fill="rgb(125,129,121)"/><rect x="6" y="8" width="1" height="1" fill="rgb(140,144,136)"/><rect x="8" y="8" width="1" height="1" fill="rgb(150,154,146)"/><rect x="10" y="8" width="1" height="1" fill="rgb(125,129,121)"/><rect x="12" y="8" width="1" height="1" fill="rgb(105,109,101)"/><rect x="14" y="8" width="1" height="1" fill="rgb(105,109,101)"/><rect x="1" y="9" width="1" height="1" fill="rgb(190,194,186)"/><rect x="3" y="9" width="1" height="1" fill="rgb(190,194,186)"/><rect x="5" y="9" width="1" height="1" fill="rgb(140,144,136)"/><rect x="7" y="9" width="1" height="1" fill="rgb(150,154,146)"/><rect x="9" y="9" width="1" height="1" fill="rgb(190,194,186)"/><rect x="11" y="9" width="1" height="1" fill="rgb(150,154,146)"/><rect x="13" y="9" width="1" height="1" fill="rgb(140,144,136)"/><rect x="15" y="9" width="1" height="1" fill="rgb(170,174,166)"/><rect x="0" y="10" width="1" height="1" fill="rgb(170,174,166)"/><rect x="2" y="10" width="1" height="1" fill="rgb(125,129,121)"/><rect x="4" y="10" width="1" height="1" fill="rgb(170,174,166)"/><rect x="6" y="10" width="1" height="1" fill="rgb(170,174,166)"/><rect x="8" y="10" width="1" height="1" fill="rgb(150,154,146)"/><rect x="10" y="10" width="1" height="1" fill="rgb(105,109,101)"/><rect x="12" y="10" width="1" height="1" fill="rgb(155,159,151)"/><rect x="14" y="10" width="1" height="1" fill="rgb(155,159,151)"/><rect x="1" y="11" width="1" height="1" fill="rgb(105,109,101)"/><rect x="3" y="11" width="1" height="1" fill="rgb(150,154,146)"/><rect x="5" y="11" width="1" height="1" fill="rgb(140,144,136)"/><rect x="7" y="11" width="1" height="1" fill="rgb(170,174,166)"/><rect x="9" y="11" width="1" height="1" fill="rgb(125,129,121)"/><rect x="11" y="11" width="1" height="1" fill="rgb(105,109,101)"/><rect x="13" y="11" width="1" height="1" fill="rgb(140,144,136)"/><rect x="15" y="11" width="1" height="1" fill="rgb(150,154,146)"/><rect x="0" y="12" width="1" height="1" fill="rgb(190,194,186)"/><rect x="2" y="12" width="1" height="1" fill="rgb(155,159,151)"/><rect x="4" y="12" width="1" height="1" fill="rgb(105,109,101)"/><rect x="6" y="12" width="1" height="1" fill="rgb(160,164,156)"/><rect x="8" y="12" width="1" height="1" fill="rgb(155,159,151)"/><rect x="10" y="12" width="1" height="1" fill="rgb(170,174,166)"/><rect x="12" y="12" width="1" height="1" fill="rgb(125,129,121)"/><rect x="14" y="12" width="1" height="1" fill="rgb(125,129,121)"/><rect x="1" y="13" width="1" height="1" fill="rgb(125,129,121)"/><rect x="3" y="13" width="1" height="1" fill="rgb(150,154,146)"/><rect x="5" y="13" width="1" height="1" fill="rgb(150,154,146)"/><rect x="7" y="13" width="1" height="1" fill="rgb(105,109,101)"/><rect x="9" y="13" width="1" height="1" fill="rgb(160,164,156)"/><rect x="11" y="13" width="1" height="1" fill="rgb(160,164,156)"/><rect x="13" y="13" width="1" height="1" fill="rgb(190,194,186)"/><rect x="15" y="13" width="1" height="1" fill="rgb(140,144,136)"/><rect x="0" y="14" width="1" height="1" fill="rgb(190,194,186)"/><rect x="2" y="14" width="1" height="1" fill="rgb(140,144,136)"/><rect x="4" y="14" width="1" height="1" fill="rgb(170,174,166)"/><rect x="6" y="14" width="1" height="1" fill="rgb(140,144,136)"/><rect x="8" y="14" width="1" height="1" fill="rgb(140,144,136)"/><rect x="10" y="14" width="1" height="1" fill="rgb(155,159,151)"/><rect x="12" y="14" width="1" height="1" fill="rgb(150,154,146)"/><rect x="14" y="14" width="1" height="1" fill="rgb(150,154,146)"/><rect x="1" y="15" width="1" height="1" fill="rgb(150,154,146)"/><rect x="3" y="15" width="1" height="1" fill="rgb(140,144,136)"/><rect x="5" y="15" width="1" height="1" fill="rgb(150,154,146)"/><rect x="7" y="15" width="1" height="1" fill="rgb(170,174,166)"/><rect x="9" y="15" width="1" height="1" fill="rgb(190,194,186)"/><rect x="11" y="15" width="1" height="1" fill="rgb(125,129,121)"/><rect x="13" y="15" width="1" height="1" fill="rgb(170,174,166)"/><rect x="15" y="15" width="1" height="1" fill="rgb(105,109,101)"/></pattern></defs>
<clipPath id="vp"><rect x="423" y="0" width="581" height="726"/></clipPath><g clip-path="url(#vp)">
<polygon points="716.5,302.8 708.9,283.8 1003.4,369.2 958.0,372.8" fill="url(#gA2)" stroke="#000" stroke-width="0.9" stroke-linejoin="round" />
<polygon points="716.5,302.8 958.0,372.8 958.0,374.6 716.5,304.6" fill="#4c4c4c" stroke="#000" stroke-width="0.9" stroke-linejoin="round" />
<polygon points="712.7,258.6 980.7,336.3 980.7,371.0 712.7,293.3" fill="url(#gC)" stroke="#000" stroke-width="0.9" stroke-linejoin="round" />
<polygon points="716.5,266.3 958.0,336.3 958.0,338.1 716.5,268.1" fill="#4c4c4c" stroke="#000" stroke-width="0.9" stroke-linejoin="round" />
<polygon points="716.5,266.3 708.9,247.3 1003.4,332.7 958.0,336.3" fill="url(#gA)" stroke="#000" stroke-width="0.9" stroke-linejoin="round" />
<polygon points="445.8,441.6 472.3,449.3 716.5,302.8 708.9,283.8" fill="url(#gA2)" stroke="#000" stroke-width="0.9" stroke-linejoin="round" />
<polygon points="472.3,449.3 716.5,302.8 716.5,304.6 472.3,451.1" fill="#8c8c8c" stroke="#000" stroke-width="0.9" stroke-linejoin="round" />
<polygon points="445.8,441.6 472.3,449.3 472.3,451.1 445.8,443.4" fill="#4c4c4c" stroke="#000" stroke-width="0.9" stroke-linejoin="round" />
<polygon points="459.0,410.8 712.7,258.6 712.7,293.3 459.0,445.5" fill="url(#gB)" stroke="#000" stroke-width="0.9" stroke-linejoin="round" />
<line x1="459.0" y1="410.8" x2="459.0" y2="445.5" stroke="#000" stroke-width="1.6" />
<polygon points="472.3,412.8 716.5,266.3 716.5,268.1 472.3,414.6" fill="#8c8c8c" stroke="#000" stroke-width="0.9" stroke-linejoin="round" />
<polygon points="445.8,405.1 472.3,412.8 472.3,414.6 445.8,406.9" fill="#4c4c4c" stroke="#000" stroke-width="0.9" stroke-linejoin="round" />
<polygon points="445.8,405.1 472.3,412.8 716.5,266.3 708.9,247.3" fill="url(#gA)" stroke="#000" stroke-width="0.9" stroke-linejoin="round" />
<line x1="716.5" y1="266.3" x2="708.9" y2="247.3" stroke="#000" stroke-width="0.8" />
<line x1="716.5" y1="302.8" x2="712.7" y2="293.3" stroke="#000" stroke-width="0.8" />
<line x1="712.7" y1="258.6" x2="712.7" y2="293.3" stroke="#000" stroke-width="1.0" />
<line x1="460.0" y1="427.5" x2="712.7" y2="275.9" stroke="#f00" stroke-width="1.1" stroke-dasharray="23.3 8.8 1.7 8.8" stroke-dashoffset="1.8"/>
<line x1="714.7" y1="276.5" x2="980.7" y2="353.7" stroke="#f00" stroke-width="1.3" stroke-dasharray="1.4 2.2 1.4 2.2 1.4 2.2 1.4 2.2 1.4 14 1.4 16"/>
<polygon points="694.3,531.1 720.8,538.7 1003.4,369.2 958.0,372.8" fill="url(#gA2)" stroke="#000" stroke-width="0.9" stroke-linejoin="round" />
<polygon points="720.8,538.7 1003.4,369.2 1003.4,371.0 720.8,540.5" fill="#8c8c8c" stroke="#000" stroke-width="0.9" stroke-linejoin="round" />
<polygon points="694.3,531.1 720.8,538.7 720.8,540.5 694.3,532.9" fill="#4c4c4c" stroke="#000" stroke-width="0.9" stroke-linejoin="round" />
<polygon points="707.5,500.2 980.7,336.3 980.7,371.0 707.5,534.9" fill="url(#gB)" stroke="#000" stroke-width="0.9" stroke-linejoin="round" />
<line x1="707.5" y1="500.2" x2="707.5" y2="534.9" stroke="#000" stroke-width="1.6" />
<polygon points="720.8,502.2 1003.4,332.7 1003.4,334.5 720.8,504.0" fill="#8c8c8c" stroke="#000" stroke-width="0.9" stroke-linejoin="round" />
<polygon points="694.3,494.6 720.8,502.2 720.8,504.0 694.3,496.4" fill="#4c4c4c" stroke="#000" stroke-width="0.9" stroke-linejoin="round" />
<polygon points="694.3,494.6 720.8,502.2 1003.4,332.7 958.0,336.3" fill="url(#gA)" stroke="#000" stroke-width="0.9" stroke-linejoin="round" />
<line x1="708.5" y1="517.0" x2="980.7" y2="353.7" stroke="#f00" stroke-width="1.1" stroke-dasharray="23.3 8.8 1.7 8.8" stroke-dashoffset="-5.5"/>
<line x1="980.7" y1="353.7" x2="989.2" y2="348.4" stroke="#f00" stroke-width="1.1" />
<line x1="980.7" y1="353.7" x2="991.7" y2="356.7" stroke="#f00" stroke-width="1.1" />
<polygon points="712.6,255.1 980.8,332.9 980.8,312.9 712.6,235.1" fill="#a08538" stroke="#000" stroke-width="0.9" stroke-linejoin="round" />
<polygon points="711.3,229.4 993.6,311.3 980.8,312.9 712.6,235.1" fill="#f1d566" stroke="#000" stroke-width="0.9" stroke-linejoin="round" />
<polygon points="477.5,396.2 712.6,255.1 712.6,235.1 477.5,376.2" fill="#dfbe5c" stroke="#000" stroke-width="0.9" stroke-linejoin="round" />
<polygon points="470.2,374.1 711.3,229.4 712.6,235.1 477.5,376.2" fill="#f1d566" stroke="#000" stroke-width="0.9" stroke-linejoin="round" />
<polygon points="470.2,394.1 477.5,396.2 477.5,376.2 470.2,374.1" fill="#a08538" stroke="#000" stroke-width="0.9" stroke-linejoin="round" />
<rect x="734.2" y="165.9" width="2.6" height="97.0" fill="#4a3a10" shape-rendering="auto"/><rect x="735.1" y="165.9" width="1.7" height="96.6" fill="#c6a242" shape-rendering="auto"/>
<rect x="808.3" y="187.4" width="2.6" height="97.0" fill="#4a3a10" shape-rendering="auto"/><rect x="809.2" y="187.4" width="1.7" height="96.6" fill="#c6a242" shape-rendering="auto"/>
<rect x="882.4" y="208.9" width="2.6" height="97.0" fill="#4a3a10" shape-rendering="auto"/><rect x="883.3" y="208.9" width="1.7" height="96.6" fill="#c6a242" shape-rendering="auto"/>
<rect x="956.5" y="230.4" width="2.6" height="97.0" fill="#4a3a10" shape-rendering="auto"/><rect x="957.4" y="230.4" width="1.7" height="96.6" fill="#c6a242" shape-rendering="auto"/>
<polygon points="753.8,182.7 757.3,183.7 757.3,198.7 753.8,197.7" fill="#dfbe5c" stroke="none" stroke-width="0" stroke-linejoin="round" />
<polygon points="753.8,242.2 757.3,243.2 757.3,258.2 753.8,257.2" fill="#dfbe5c" stroke="none" stroke-width="0" stroke-linejoin="round" />
<polygon points="827.9,204.2 831.4,205.2 831.4,220.2 827.9,219.2" fill="#dfbe5c" stroke="none" stroke-width="0" stroke-linejoin="round" />
<polygon points="827.9,263.7 831.4,264.7 831.4,279.7 827.9,278.7" fill="#dfbe5c" stroke="none" stroke-width="0" stroke-linejoin="round" />
<polygon points="902.0,225.7 905.5,226.7 905.5,241.7 902.0,240.7" fill="#dfbe5c" stroke="none" stroke-width="0" stroke-linejoin="round" />
<polygon points="902.0,285.2 905.5,286.2 905.5,301.2 902.0,300.2" fill="#dfbe5c" stroke="none" stroke-width="0" stroke-linejoin="round" />
<polygon points="743.9,178.0 800.8,194.5 800.8,272.2 743.9,255.7" fill="url(#glass)"/><polygon points="743.9,178.0 800.8,194.5 800.8,272.2 743.9,255.7" fill="none" stroke="#000" stroke-width="0.9"/>
<line x1="744.9" y1="239.1" x2="799.8" y2="255.1" stroke="#222" stroke-width="0.9" stroke-dasharray="3 2"/>
<line x1="762.9" y1="211.9" x2="780.8" y2="236.9" stroke="#f00" stroke-width="1.1" stroke-dasharray="6 1.2 1.5 1.2"/>
<line x1="773.0" y1="222.4" x2="776.0" y2="221.4" stroke="#f00" stroke-width="1.0" />
<line x1="763.9" y1="230.9" x2="766.1" y2="229.7" stroke="#f00" stroke-width="1.2" />
<polygon points="818.0,199.5 874.9,216.0 874.9,293.7 818.0,277.2" fill="url(#glass)"/><polygon points="818.0,199.5 874.9,216.0 874.9,293.7 818.0,277.2" fill="none" stroke="#000" stroke-width="0.9"/>
<line x1="819.0" y1="260.6" x2="873.9" y2="276.6" stroke="#222" stroke-width="0.9" stroke-dasharray="3 2"/>
<line x1="837.0" y1="233.4" x2="854.9" y2="258.4" stroke="#f00" stroke-width="1.1" stroke-dasharray="6 1.2 1.5 1.2"/>
<line x1="847.1" y1="243.9" x2="850.1" y2="242.9" stroke="#f00" stroke-width="1.0" />
<line x1="838.0" y1="252.4" x2="840.2" y2="251.2" stroke="#f00" stroke-width="1.2" />
<polygon points="892.1,221.0 949.0,237.5 949.0,315.2 892.1,298.7" fill="url(#glass)"/><polygon points="892.1,221.0 949.0,237.5 949.0,315.2 892.1,298.7" fill="none" stroke="#000" stroke-width="0.9"/>
<line x1="893.1" y1="282.1" x2="948.0" y2="298.0" stroke="#222" stroke-width="0.9" stroke-dasharray="3 2"/>
<line x1="911.1" y1="254.9" x2="929.0" y2="279.9" stroke="#f00" stroke-width="1.1" stroke-dasharray="6 1.2 1.5 1.2"/>
<line x1="921.2" y1="265.4" x2="924.2" y2="264.4" stroke="#f00" stroke-width="1.0" />
<line x1="912.1" y1="273.9" x2="914.3" y2="272.7" stroke="#f00" stroke-width="1.2" />
<polygon points="736.8,177.4 741.9,180.7 741.9,195.6 736.8,192.0" fill="#a08538" stroke="#000" stroke-width="0.9" stroke-linejoin="round" />
<polygon points="751.1,184.3 753.8,182.7 753.8,197.7 751.1,199.3" fill="#dfbe5c" stroke="#000" stroke-width="0.9" stroke-linejoin="round" />
<polygon points="741.9,181.6 751.1,184.3 751.1,199.3 741.9,196.6" fill="#a08538" stroke="#000" stroke-width="0.9" stroke-linejoin="round" />
<polygon points="741.9,181.6 751.1,184.3 753.8,182.7 744.6,180.0" fill="#f1d566" stroke="#000" stroke-width="0.9" stroke-linejoin="round" />
<rect x="748.3" y="189.5" width="2.8" height="3.4" fill="#000"/>
<polygon points="736.8,236.9 741.9,240.2 741.9,255.1 736.8,251.5" fill="#a08538" stroke="#000" stroke-width="0.9" stroke-linejoin="round" />
<polygon points="751.1,243.8 753.8,242.2 753.8,257.2 751.1,258.8" fill="#dfbe5c" stroke="#000" stroke-width="0.9" stroke-linejoin="round" />
<polygon points="741.9,241.1 751.1,243.8 751.1,258.8 741.9,256.1" fill="#a08538" stroke="#000" stroke-width="0.9" stroke-linejoin="round" />
<polygon points="741.9,241.1 751.1,243.8 753.8,242.2 744.6,239.5" fill="#f1d566" stroke="#000" stroke-width="0.9" stroke-linejoin="round" />
<rect x="748.3" y="249.0" width="2.8" height="3.4" fill="#000"/>
<rect x="734.2" y="165.9" width="2.6" height="69.0" fill="#4a3a10" shape-rendering="auto"/><rect x="735.1" y="165.9" width="1.7" height="68.6" fill="#c6a242" shape-rendering="auto"/>
<polygon points="810.9,198.9 816.0,202.2 816.0,217.1 810.9,213.5" fill="#a08538" stroke="#000" stroke-width="0.9" stroke-linejoin="round" />
<polygon points="825.2,205.8 827.9,204.2 827.9,219.2 825.2,220.8" fill="#dfbe5c" stroke="#000" stroke-width="0.9" stroke-linejoin="round" />
<polygon points="816.0,203.1 825.2,205.8 825.2,220.8 816.0,218.1" fill="#a08538" stroke="#000" stroke-width="0.9" stroke-linejoin="round" />
<polygon points="816.0,203.1 825.2,205.8 827.9,204.2 818.7,201.5" fill="#f1d566" stroke="#000" stroke-width="0.9" stroke-linejoin="round" />
<rect x="822.4" y="211.0" width="2.8" height="3.4" fill="#000"/>
<polygon points="800.7,195.9 808.2,197.7 808.2,213.5 800.7,210.8" fill="#a08538" stroke="#000" stroke-width="0.9" stroke-linejoin="round" />
<polygon points="795.9,197.0 798.6,195.4 798.6,210.4 795.9,212.0" fill="#dfbe5c" stroke="#000" stroke-width="0.9" stroke-linejoin="round" />
<polygon points="786.7,194.3 795.9,197.0 795.9,212.0 786.7,209.3" fill="#a08538" stroke="#000" stroke-width="0.9" stroke-linejoin="round" />
<polygon points="786.7,194.3 795.9,197.0 798.6,195.4 789.4,192.7" fill="#f1d566" stroke="#000" stroke-width="0.9" stroke-linejoin="round" />
<rect x="786.7" y="201.8" width="2.4" height="2.4" fill="#000"/>
<polygon points="810.9,258.4 816.0,261.7 816.0,276.6 810.9,273.0" fill="#a08538" stroke="#000" stroke-width="0.9" stroke-linejoin="round" />
<polygon points="825.2,265.3 827.9,263.7 827.9,278.7 825.2,280.3" fill="#dfbe5c" stroke="#000" stroke-width="0.9" stroke-linejoin="round" />
<polygon points="816.0,262.6 825.2,265.3 825.2,280.3 816.0,277.6" fill="#a08538" stroke="#000" stroke-width="0.9" stroke-linejoin="round" />
<polygon points="816.0,262.6 825.2,265.3 827.9,263.7 818.7,261.0" fill="#f1d566" stroke="#000" stroke-width="0.9" stroke-linejoin="round" />
<rect x="822.4" y="270.5" width="2.8" height="3.4" fill="#000"/>
<polygon points="800.7,255.4 808.2,257.2 808.2,273.0 800.7,270.3" fill="#a08538" stroke="#000" stroke-width="0.9" stroke-linejoin="round" />
<polygon points="795.9,256.5 798.6,254.9 798.6,269.9 795.9,271.5" fill="#dfbe5c" stroke="#000" stroke-width="0.9" stroke-linejoin="round" />
<polygon points="786.7,253.8 795.9,256.5 795.9,271.5 786.7,268.8" fill="#a08538" stroke="#000" stroke-width="0.9" stroke-linejoin="round" />
<polygon points="786.7,253.8 795.9,256.5 798.6,254.9 789.4,252.2" fill="#f1d566" stroke="#000" stroke-width="0.9" stroke-linejoin="round" />
<rect x="786.7" y="261.3" width="2.4" height="2.4" fill="#000"/>
<rect x="808.3" y="187.4" width="2.6" height="69.0" fill="#4a3a10" shape-rendering="auto"/><rect x="809.2" y="187.4" width="1.7" height="68.6" fill="#c6a242" shape-rendering="auto"/>
<polygon points="885.0,220.4 890.1,223.7 890.1,238.6 885.0,235.0" fill="#a08538" stroke="#000" stroke-width="0.9" stroke-linejoin="round" />
<polygon points="899.3,227.3 902.0,225.7 902.0,240.7 899.3,242.3" fill="#dfbe5c" stroke="#000" stroke-width="0.9" stroke-linejoin="round" />
<polygon points="890.1,224.6 899.3,227.3 899.3,242.3 890.1,239.6" fill="#a08538" stroke="#000" stroke-width="0.9" stroke-linejoin="round" />
<polygon points="890.1,224.6 899.3,227.3 902.0,225.7 892.8,223.0" fill="#f1d566" stroke="#000" stroke-width="0.9" stroke-linejoin="round" />
<rect x="896.5" y="232.5" width="2.8" height="3.4" fill="#000"/>
<polygon points="874.8,217.4 882.3,219.2 882.3,235.0 874.8,232.3" fill="#a08538" stroke="#000" stroke-width="0.9" stroke-linejoin="round" />
<polygon points="870.0,218.5 872.7,216.9 872.7,231.9 870.0,233.5" fill="#dfbe5c" stroke="#000" stroke-width="0.9" stroke-linejoin="round" />
<polygon points="860.8,215.8 870.0,218.5 870.0,233.5 860.8,230.8" fill="#a08538" stroke="#000" stroke-width="0.9" stroke-linejoin="round" />
<polygon points="860.8,215.8 870.0,218.5 872.7,216.9 863.5,214.2" fill="#f1d566" stroke="#000" stroke-width="0.9" stroke-linejoin="round" />
<rect x="860.8" y="223.3" width="2.4" height="2.4" fill="#000"/>
<polygon points="885.0,279.9 890.1,283.2 890.1,298.1 885.0,294.5" fill="#a08538" stroke="#000" stroke-width="0.9" stroke-linejoin="round" />
<polygon points="899.3,286.8 902.0,285.2 902.0,300.2 899.3,301.8" fill="#dfbe5c" stroke="#000" stroke-width="0.9" stroke-linejoin="round" />
<polygon points="890.1,284.1 899.3,286.8 899.3,301.8 890.1,299.1" fill="#a08538" stroke="#000" stroke-width="0.9" stroke-linejoin="round" />
<polygon points="890.1,284.1 899.3,286.8 902.0,285.2 892.8,282.5" fill="#f1d566" stroke="#000" stroke-width="0.9" stroke-linejoin="round" />
<rect x="896.5" y="292.0" width="2.8" height="3.4" fill="#000"/>
<polygon points="874.8,276.9 882.3,278.7 882.3,294.5 874.8,291.8" fill="#a08538" stroke="#000" stroke-width="0.9" stroke-linejoin="round" />
<polygon points="870.0,278.0 872.7,276.4 872.7,291.4 870.0,293.0" fill="#dfbe5c" stroke="#000" stroke-width="0.9" stroke-linejoin="round" />
<polygon points="860.8,275.3 870.0,278.0 870.0,293.0 860.8,290.3" fill="#a08538" stroke="#000" stroke-width="0.9" stroke-linejoin="round" />
<polygon points="860.8,275.3 870.0,278.0 872.7,276.4 863.5,273.7" fill="#f1d566" stroke="#000" stroke-width="0.9" stroke-linejoin="round" />
<rect x="860.8" y="282.8" width="2.4" height="2.4" fill="#000"/>
<rect x="882.4" y="208.9" width="2.6" height="69.0" fill="#4a3a10" shape-rendering="auto"/><rect x="883.3" y="208.9" width="1.7" height="68.6" fill="#c6a242" shape-rendering="auto"/>
<polygon points="948.9,238.9 956.4,240.7 956.4,256.5 948.9,253.8" fill="#a08538" stroke="#000" stroke-width="0.9" stroke-linejoin="round" />
<polygon points="944.1,240.0 946.8,238.4 946.8,253.4 944.1,255.0" fill="#dfbe5c" stroke="#000" stroke-width="0.9" stroke-linejoin="round" />
<polygon points="934.9,237.3 944.1,240.0 944.1,255.0 934.9,252.3" fill="#a08538" stroke="#000" stroke-width="0.9" stroke-linejoin="round" />
<polygon points="934.9,237.3 944.1,240.0 946.8,238.4 937.6,235.7" fill="#f1d566" stroke="#000" stroke-width="0.9" stroke-linejoin="round" />
<rect x="934.9" y="244.8" width="2.4" height="2.4" fill="#000"/>
<polygon points="948.9,298.4 956.4,300.2 956.4,316.0 948.9,313.3" fill="#a08538" stroke="#000" stroke-width="0.9" stroke-linejoin="round" />
<polygon points="944.1,299.5 946.8,297.9 946.8,312.9 944.1,314.5" fill="#dfbe5c" stroke="#000" stroke-width="0.9" stroke-linejoin="round" />
<polygon points="934.9,296.8 944.1,299.5 944.1,314.5 934.9,311.8" fill="#a08538" stroke="#000" stroke-width="0.9" stroke-linejoin="round" />
<polygon points="934.9,296.8 944.1,299.5 946.8,297.9 937.6,295.2" fill="#f1d566" stroke="#000" stroke-width="0.9" stroke-linejoin="round" />
<rect x="934.9" y="304.3" width="2.4" height="2.4" fill="#000"/>
<rect x="956.5" y="230.4" width="2.6" height="69.0" fill="#4a3a10" shape-rendering="auto"/><rect x="957.4" y="230.4" width="1.7" height="68.6" fill="#c6a242" shape-rendering="auto"/>
<polygon points="513.3,288.2 518.3,285.7 518.3,300.9 513.3,303.4" fill="#a08538" stroke="none" stroke-width="0" stroke-linejoin="round" />
<polygon points="513.3,347.7 518.3,345.2 518.3,360.4 513.3,362.9" fill="#a08538" stroke="none" stroke-width="0" stroke-linejoin="round" />
<polygon points="568.4,255.2 573.4,252.7 573.4,267.9 568.4,270.4" fill="#a08538" stroke="none" stroke-width="0" stroke-linejoin="round" />
<polygon points="568.4,314.7 573.4,312.2 573.4,327.4 568.4,329.9" fill="#a08538" stroke="none" stroke-width="0" stroke-linejoin="round" />
<polygon points="623.5,222.1 628.5,219.6 628.5,234.8 623.5,237.3" fill="#a08538" stroke="none" stroke-width="0" stroke-linejoin="round" />
<polygon points="623.5,281.6 628.5,279.1 628.5,294.3 623.5,296.8" fill="#a08538" stroke="none" stroke-width="0" stroke-linejoin="round" />
<polygon points="678.6,189.0 683.6,186.5 683.6,201.7 678.6,204.2" fill="#a08538" stroke="none" stroke-width="0" stroke-linejoin="round" />
<polygon points="678.6,248.5 683.6,246.0 683.6,261.2 678.6,263.7" fill="#a08538" stroke="none" stroke-width="0" stroke-linejoin="round" />
<polygon points="483.9,305.5 525.8,280.4 525.8,358.1 483.9,383.2" fill="url(#glass)"/><polygon points="483.9,305.5 525.8,280.4 525.8,358.1 483.9,383.2" fill="none" stroke="#000" stroke-width="0.9"/>
<line x1="484.9" y1="365.2" x2="524.8" y2="341.3" stroke="#222" stroke-width="0.9" stroke-dasharray="3 2"/>
<line x1="499.7" y1="326.4" x2="510.8" y2="337.8" stroke="#f00" stroke-width="1.2" />
<line x1="505.8" y1="329.0" x2="508.0" y2="327.1" stroke="#f00" stroke-width="1.1" />
<line x1="498.4" y1="345.3" x2="500.9" y2="341.3" stroke="#f00" stroke-width="1.2" />
<polygon points="539.0,272.4 580.9,247.3 580.9,325.0 539.0,350.1" fill="url(#glass)"/><polygon points="539.0,272.4 580.9,247.3 580.9,325.0 539.0,350.1" fill="none" stroke="#000" stroke-width="0.9"/>
<line x1="540.0" y1="332.2" x2="579.9" y2="308.2" stroke="#222" stroke-width="0.9" stroke-dasharray="3 2"/>
<line x1="554.8" y1="293.3" x2="565.9" y2="304.7" stroke="#f00" stroke-width="1.2" />
<line x1="560.9" y1="295.9" x2="563.1" y2="294.0" stroke="#f00" stroke-width="1.1" />
<line x1="553.5" y1="312.2" x2="556.0" y2="308.2" stroke="#f00" stroke-width="1.2" />
<polygon points="594.1,239.4 636.0,214.3 636.0,292.0 594.1,317.1" fill="url(#glass)"/><polygon points="594.1,239.4 636.0,214.3 636.0,292.0 594.1,317.1" fill="none" stroke="#000" stroke-width="0.9"/>
<line x1="595.1" y1="299.1" x2="635.0" y2="275.2" stroke="#222" stroke-width="0.9" stroke-dasharray="3 2"/>
<line x1="609.9" y1="260.3" x2="621.0" y2="271.7" stroke="#f00" stroke-width="1.2" />
<line x1="616.0" y1="262.9" x2="618.2" y2="261.0" stroke="#f00" stroke-width="1.1" />
<line x1="608.6" y1="279.2" x2="611.1" y2="275.2" stroke="#f00" stroke-width="1.2" />
<polygon points="649.2,206.3 691.1,181.2 691.1,258.9 649.2,284.0" fill="url(#glass)"/><polygon points="649.2,206.3 691.1,181.2 691.1,258.9 649.2,284.0" fill="none" stroke="#000" stroke-width="0.9"/>
<line x1="650.2" y1="266.1" x2="690.1" y2="242.1" stroke="#222" stroke-width="0.9" stroke-dasharray="3 2"/>
<line x1="665.0" y1="227.2" x2="676.1" y2="238.6" stroke="#f00" stroke-width="1.2" />
<line x1="671.1" y1="229.8" x2="673.3" y2="227.9" stroke="#f00" stroke-width="1.1" />
<line x1="663.7" y1="246.1" x2="666.2" y2="242.1" stroke="#f00" stroke-width="1.2" />
<polygon points="478.7,370.9 483.3,368.2 483.3,382.0 478.7,384.7" fill="#dfbe5c" stroke="#000" stroke-width="0.9" stroke-linejoin="round" />
<polygon points="483.9,365.9 488.3,367.2 488.3,382.4 483.9,381.1" fill="#a08538" stroke="#000" stroke-width="0.9" stroke-linejoin="round" />
<polygon points="488.3,367.2 495.8,362.7 495.8,377.9 488.3,382.4" fill="#dfbe5c" stroke="#000" stroke-width="0.9" stroke-linejoin="round" />
<polygon points="483.9,365.9 488.3,367.2 495.8,362.7 491.4,361.4" fill="#f1d566" stroke="#000" stroke-width="0.9" stroke-linejoin="round" />
<rect x="493.8" y="371.8" width="2.2" height="2.6" fill="#000"/>
<polygon points="478.7,311.4 483.3,308.7 483.3,322.5 478.7,325.2" fill="#dfbe5c" stroke="#000" stroke-width="0.9" stroke-linejoin="round" />
<polygon points="483.9,306.4 488.3,307.7 488.3,322.9 483.9,321.6" fill="#a08538" stroke="#000" stroke-width="0.9" stroke-linejoin="round" />
<polygon points="488.3,307.7 495.8,303.2 495.8,318.4 488.3,322.9" fill="#dfbe5c" stroke="#000" stroke-width="0.9" stroke-linejoin="round" />
<polygon points="483.9,306.4 488.3,307.7 495.8,303.2 491.4,301.9" fill="#f1d566" stroke="#000" stroke-width="0.9" stroke-linejoin="round" />
<rect x="493.8" y="312.3" width="2.2" height="2.6" fill="#000"/>
<rect x="476.4" y="301.3" width="2.6" height="97.0" fill="#4a3a10" shape-rendering="auto"/><rect x="477.3" y="301.3" width="1.7" height="96.6" fill="#c6a242" shape-rendering="auto"/>
<polygon points="530.2,343.2 531.8,342.2 531.8,356.2 530.2,357.2" fill="#2a2008" stroke="#000" stroke-width="0.6" stroke-linejoin="round" />
<polygon points="518.3,345.2 522.7,346.5 522.7,361.7 518.3,360.4" fill="#a08538" stroke="#000" stroke-width="0.9" stroke-linejoin="round" />
<polygon points="522.7,346.5 530.2,342.0 530.2,357.2 522.7,361.7" fill="#dfbe5c" stroke="#000" stroke-width="0.9" stroke-linejoin="round" />
<polygon points="518.3,345.2 522.7,346.5 530.2,342.0 525.8,340.7" fill="#f1d566" stroke="#000" stroke-width="0.9" stroke-linejoin="round" />
<rect x="523.5" y="353.1" width="1.8" height="2.6" fill="#000"/>
<polygon points="533.8,337.8 538.4,335.1 538.4,348.9 533.8,351.6" fill="#dfbe5c" stroke="#000" stroke-width="0.9" stroke-linejoin="round" />
<polygon points="539.0,332.8 543.4,334.1 543.4,349.3 539.0,348.0" fill="#a08538" stroke="#000" stroke-width="0.9" stroke-linejoin="round" />
<polygon points="543.4,334.1 550.9,329.6 550.9,344.8 543.4,349.3" fill="#dfbe5c" stroke="#000" stroke-width="0.9" stroke-linejoin="round" />
<polygon points="539.0,332.8 543.4,334.1 550.9,329.6 546.5,328.3" fill="#f1d566" stroke="#000" stroke-width="0.9" stroke-linejoin="round" />
<rect x="548.9" y="338.7" width="2.2" height="2.6" fill="#000"/>
<polygon points="530.2,283.7 531.8,282.7 531.8,296.7 530.2,297.7" fill="#2a2008" stroke="#000" stroke-width="0.6" stroke-linejoin="round" />
<polygon points="518.3,285.7 522.7,287.0 522.7,302.2 518.3,300.9" fill="#a08538" stroke="#000" stroke-width="0.9" stroke-linejoin="round" />
<polygon points="522.7,287.0 530.2,282.5 530.2,297.7 522.7,302.2" fill="#dfbe5c" stroke="#000" stroke-width="0.9" stroke-linejoin="round" />
<polygon points="518.3,285.7 522.7,287.0 530.2,282.5 525.8,281.2" fill="#f1d566" stroke="#000" stroke-width="0.9" stroke-linejoin="round" />
<rect x="523.5" y="293.6" width="1.8" height="2.6" fill="#000"/>
<polygon points="533.8,278.3 538.4,275.6 538.4,289.4 533.8,292.1" fill="#dfbe5c" stroke="#000" stroke-width="0.9" stroke-linejoin="round" />
<polygon points="539.0,273.3 543.4,274.6 543.4,289.8 539.0,288.5" fill="#a08538" stroke="#000" stroke-width="0.9" stroke-linejoin="round" />
<polygon points="543.4,274.6 550.9,270.1 550.9,285.3 543.4,289.8" fill="#dfbe5c" stroke="#000" stroke-width="0.9" stroke-linejoin="round" />
<polygon points="539.0,273.3 543.4,274.6 550.9,270.1 546.5,268.8" fill="#f1d566" stroke="#000" stroke-width="0.9" stroke-linejoin="round" />
<rect x="548.9" y="279.2" width="2.2" height="2.6" fill="#000"/>
<rect x="531.5" y="268.2" width="2.6" height="97.0" fill="#4a3a10" shape-rendering="auto"/><rect x="532.4" y="268.2" width="1.7" height="96.6" fill="#c6a242" shape-rendering="auto"/>
<polygon points="585.3,310.2 586.9,309.2 586.9,323.2 585.3,324.2" fill="#2a2008" stroke="#000" stroke-width="0.6" stroke-linejoin="round" />
<polygon points="573.4,312.2 577.8,313.5 577.8,328.7 573.4,327.4" fill="#a08538" stroke="#000" stroke-width="0.9" stroke-linejoin="round" />
<polygon points="577.8,313.5 585.3,309.0 585.3,324.2 577.8,328.7" fill="#dfbe5c" stroke="#000" stroke-width="0.9" stroke-linejoin="round" />
<polygon points="573.4,312.2 577.8,313.5 585.3,309.0 580.9,307.7" fill="#f1d566" stroke="#000" stroke-width="0.9" stroke-linejoin="round" />
<rect x="578.6" y="320.1" width="1.8" height="2.6" fill="#000"/>
<polygon points="588.9,304.8 593.5,302.1 593.5,315.9 588.9,318.6" fill="#dfbe5c" stroke="#000" stroke-width="0.9" stroke-linejoin="round" />
<polygon points="594.1,299.8 598.5,301.1 598.5,316.3 594.1,315.0" fill="#a08538" stroke="#000" stroke-width="0.9" stroke-linejoin="round" />
<polygon points="598.5,301.1 606.0,296.6 606.0,311.8 598.5,316.3" fill="#dfbe5c" stroke="#000" stroke-width="0.9" stroke-linejoin="round" />
<polygon points="594.1,299.8 598.5,301.1 606.0,296.6 601.6,295.3" fill="#f1d566" stroke="#000" stroke-width="0.9" stroke-linejoin="round" />
<rect x="604.0" y="305.7" width="2.2" height="2.6" fill="#000"/>
<polygon points="585.3,250.7 586.9,249.7 586.9,263.7 585.3,264.7" fill="#2a2008" stroke="#000" stroke-width="0.6" stroke-linejoin="round" />
<polygon points="573.4,252.7 577.8,254.0 577.8,269.2 573.4,267.9" fill="#a08538" stroke="#000" stroke-width="0.9" stroke-linejoin="round" />
<polygon points="577.8,254.0 585.3,249.5 585.3,264.7 577.8,269.2" fill="#dfbe5c" stroke="#000" stroke-width="0.9" stroke-linejoin="round" />
<polygon points="573.4,252.7 577.8,254.0 585.3,249.5 580.9,248.2" fill="#f1d566" stroke="#000" stroke-width="0.9" stroke-linejoin="round" />
<rect x="578.6" y="260.6" width="1.8" height="2.6" fill="#000"/>
<polygon points="588.9,245.3 593.5,242.6 593.5,256.4 588.9,259.1" fill="#dfbe5c" stroke="#000" stroke-width="0.9" stroke-linejoin="round" />
<polygon points="594.1,240.3 598.5,241.6 598.5,256.8 594.1,255.5" fill="#a08538" stroke="#000" stroke-width="0.9" stroke-linejoin="round" />
<polygon points="598.5,241.6 606.0,237.1 606.0,252.3 598.5,256.8" fill="#dfbe5c" stroke="#000" stroke-width="0.9" stroke-linejoin="round" />
<polygon points="594.1,240.3 598.5,241.6 606.0,237.1 601.6,235.8" fill="#f1d566" stroke="#000" stroke-width="0.9" stroke-linejoin="round" />
<rect x="604.0" y="246.2" width="2.2" height="2.6" fill="#000"/>
<rect x="586.6" y="235.2" width="2.6" height="97.0" fill="#4a3a10" shape-rendering="auto"/><rect x="587.5" y="235.2" width="1.7" height="96.6" fill="#c6a242" shape-rendering="auto"/>
<polygon points="640.4,277.1 642.0,276.1 642.0,290.1 640.4,291.1" fill="#2a2008" stroke="#000" stroke-width="0.6" stroke-linejoin="round" />
<polygon points="628.5,279.1 632.9,280.4 632.9,295.6 628.5,294.3" fill="#a08538" stroke="#000" stroke-width="0.9" stroke-linejoin="round" />
<polygon points="632.9,280.4 640.4,275.9 640.4,291.1 632.9,295.6" fill="#dfbe5c" stroke="#000" stroke-width="0.9" stroke-linejoin="round" />
<polygon points="628.5,279.1 632.9,280.4 640.4,275.9 636.0,274.6" fill="#f1d566" stroke="#000" stroke-width="0.9" stroke-linejoin="round" />
<rect x="633.7" y="287.0" width="1.8" height="2.6" fill="#000"/>
<polygon points="644.0,271.7 648.6,269.0 648.6,282.8 644.0,285.5" fill="#dfbe5c" stroke="#000" stroke-width="0.9" stroke-linejoin="round" />
<polygon points="649.2,266.7 653.6,268.0 653.6,283.2 649.2,281.9" fill="#a08538" stroke="#000" stroke-width="0.9" stroke-linejoin="round" />
<polygon points="653.6,268.0 661.1,263.5 661.1,278.7 653.6,283.2" fill="#dfbe5c" stroke="#000" stroke-width="0.9" stroke-linejoin="round" />
<polygon points="649.2,266.7 653.6,268.0 661.1,263.5 656.7,262.2" fill="#f1d566" stroke="#000" stroke-width="0.9" stroke-linejoin="round" />
<rect x="659.1" y="272.6" width="2.2" height="2.6" fill="#000"/>
<polygon points="640.4,217.6 642.0,216.6 642.0,230.6 640.4,231.6" fill="#2a2008" stroke="#000" stroke-width="0.6" stroke-linejoin="round" />
<polygon points="628.5,219.6 632.9,220.9 632.9,236.1 628.5,234.8" fill="#a08538" stroke="#000" stroke-width="0.9" stroke-linejoin="round" />
<polygon points="632.9,220.9 640.4,216.4 640.4,231.6 632.9,236.1" fill="#dfbe5c" stroke="#000" stroke-width="0.9" stroke-linejoin="round" />
<polygon points="628.5,219.6 632.9,220.9 640.4,216.4 636.0,215.1" fill="#f1d566" stroke="#000" stroke-width="0.9" stroke-linejoin="round" />
<rect x="633.7" y="227.5" width="1.8" height="2.6" fill="#000"/>
<polygon points="644.0,212.2 648.6,209.5 648.6,223.3 644.0,226.0" fill="#dfbe5c" stroke="#000" stroke-width="0.9" stroke-linejoin="round" />
<polygon points="649.2,207.2 653.6,208.5 653.6,223.7 649.2,222.4" fill="#a08538" stroke="#000" stroke-width="0.9" stroke-linejoin="round" />
<polygon points="653.6,208.5 661.1,204.0 661.1,219.2 653.6,223.7" fill="#dfbe5c" stroke="#000" stroke-width="0.9" stroke-linejoin="round" />
<polygon points="649.2,207.2 653.6,208.5 661.1,204.0 656.7,202.7" fill="#f1d566" stroke="#000" stroke-width="0.9" stroke-linejoin="round" />
<rect x="659.1" y="213.1" width="2.2" height="2.6" fill="#000"/>
<rect x="641.7" y="202.1" width="2.6" height="97.0" fill="#4a3a10" shape-rendering="auto"/><rect x="642.6" y="202.1" width="1.7" height="96.6" fill="#c6a242" shape-rendering="auto"/>
<polygon points="695.5,244.0 697.1,243.0 697.1,257.0 695.5,258.0" fill="#2a2008" stroke="#000" stroke-width="0.6" stroke-linejoin="round" />
<polygon points="683.6,246.0 688.0,247.3 688.0,262.5 683.6,261.2" fill="#a08538" stroke="#000" stroke-width="0.9" stroke-linejoin="round" />
<polygon points="688.0,247.3 695.5,242.8 695.5,258.0 688.0,262.5" fill="#dfbe5c" stroke="#000" stroke-width="0.9" stroke-linejoin="round" />
<polygon points="683.6,246.0 688.0,247.3 695.5,242.8 691.1,241.5" fill="#f1d566" stroke="#000" stroke-width="0.9" stroke-linejoin="round" />
<rect x="688.8" y="253.9" width="1.8" height="2.6" fill="#000"/>
<polygon points="695.5,184.5 697.1,183.5 697.1,197.5 695.5,198.5" fill="#2a2008" stroke="#000" stroke-width="0.6" stroke-linejoin="round" />
<polygon points="683.6,186.5 688.0,187.8 688.0,203.0 683.6,201.7" fill="#a08538" stroke="#000" stroke-width="0.9" stroke-linejoin="round" />
<polygon points="688.0,187.8 695.5,183.3 695.5,198.5 688.0,203.0" fill="#dfbe5c" stroke="#000" stroke-width="0.9" stroke-linejoin="round" />
<polygon points="683.6,186.5 688.0,187.8 695.5,183.3 691.1,182.0" fill="#f1d566" stroke="#000" stroke-width="0.9" stroke-linejoin="round" />
<rect x="688.8" y="194.4" width="1.8" height="2.6" fill="#000"/>
<rect x="696.8" y="169.0" width="2.6" height="97.0" fill="#4a3a10" shape-rendering="auto"/><rect x="697.7" y="169.0" width="1.7" height="96.6" fill="#c6a242" shape-rendering="auto"/>
<rect x="725.3" y="389.3" width="2.6" height="97.0" fill="#4a3a10" shape-rendering="auto"/><rect x="726.2" y="389.3" width="1.7" height="96.6" fill="#c6a242" shape-rendering="auto"/>
<rect x="784.7" y="353.7" width="2.6" height="97.0" fill="#4a3a10" shape-rendering="auto"/><rect x="785.6" y="353.7" width="1.7" height="96.6" fill="#c6a242" shape-rendering="auto"/>
<rect x="844.1" y="318.0" width="2.6" height="97.0" fill="#4a3a10" shape-rendering="auto"/><rect x="845.0" y="318.0" width="1.7" height="96.6" fill="#c6a242" shape-rendering="auto"/>
<rect x="903.5" y="282.4" width="2.6" height="97.0" fill="#4a3a10" shape-rendering="auto"/><rect x="904.4" y="282.4" width="1.7" height="96.6" fill="#c6a242" shape-rendering="auto"/>
<rect x="962.9" y="246.7" width="2.6" height="97.0" fill="#4a3a10" shape-rendering="auto"/><rect x="963.8" y="246.7" width="1.7" height="96.6" fill="#c6a242" shape-rendering="auto"/>
<polygon points="766.5,373.7 771.5,371.2 771.5,386.4 766.5,388.9" fill="#a08538" stroke="none" stroke-width="0" stroke-linejoin="round" />
<polygon points="766.5,433.2 771.5,430.7 771.5,445.9 766.5,448.4" fill="#a08538" stroke="none" stroke-width="0" stroke-linejoin="round" />
<polygon points="825.9,338.0 830.9,335.5 830.9,350.7 825.9,353.2" fill="#a08538" stroke="none" stroke-width="0" stroke-linejoin="round" />
<polygon points="825.9,397.5 830.9,395.0 830.9,410.2 825.9,412.7" fill="#a08538" stroke="none" stroke-width="0" stroke-linejoin="round" />
<polygon points="885.3,302.4 890.3,299.9 890.3,315.1 885.3,317.6" fill="#a08538" stroke="none" stroke-width="0" stroke-linejoin="round" />
<polygon points="885.3,361.9 890.3,359.4 890.3,374.6 885.3,377.1" fill="#a08538" stroke="none" stroke-width="0" stroke-linejoin="round" />
<polygon points="944.7,266.7 949.7,264.2 949.7,279.4 944.7,281.9" fill="#a08538" stroke="none" stroke-width="0" stroke-linejoin="round" />
<polygon points="944.7,326.2 949.7,323.7 949.7,338.9 944.7,341.4" fill="#a08538" stroke="none" stroke-width="0" stroke-linejoin="round" />
<polygon points="732.0,393.7 779.9,365.0 779.9,442.7 732.0,471.4" fill="url(#glass)"/><polygon points="732.0,393.7 779.9,365.0 779.9,442.7 732.0,471.4" fill="none" stroke="#000" stroke-width="0.9"/>
<line x1="749.9" y1="432.9" x2="761.9" y2="405.9" stroke="#f00" stroke-width="1.2" />
<line x1="759.9" y1="422.9" x2="762.9" y2="425.9" stroke="#f00" stroke-width="1.1" />
<polygon points="791.4,358.1 839.3,329.4 839.3,407.1 791.4,435.8" fill="url(#glass)"/><polygon points="791.4,358.1 839.3,329.4 839.3,407.1 791.4,435.8" fill="none" stroke="#000" stroke-width="0.9"/>
<line x1="809.3" y1="397.3" x2="821.3" y2="370.3" stroke="#f00" stroke-width="1.2" />
<line x1="819.3" y1="387.3" x2="822.3" y2="390.3" stroke="#f00" stroke-width="1.1" />
<polygon points="850.8,322.4 898.7,293.7 898.7,371.4 850.8,400.1" fill="url(#glass)"/><polygon points="850.8,322.4 898.7,293.7 898.7,371.4 850.8,400.1" fill="none" stroke="#000" stroke-width="0.9"/>
<line x1="868.7" y1="361.6" x2="880.7" y2="334.6" stroke="#f00" stroke-width="1.2" />
<line x1="878.7" y1="351.6" x2="881.7" y2="354.6" stroke="#f00" stroke-width="1.1" />
<polygon points="910.2,286.8 958.1,258.1 958.1,335.8 910.2,364.5" fill="url(#glass)"/><polygon points="910.2,286.8 958.1,258.1 958.1,335.8 910.2,364.5" fill="none" stroke="#000" stroke-width="0.9"/>
<line x1="928.1" y1="326.0" x2="940.1" y2="299.0" stroke="#f00" stroke-width="1.2" />
<line x1="938.1" y1="316.0" x2="941.1" y2="319.0" stroke="#f00" stroke-width="1.1" />
<polygon points="727.6,458.9 732.2,456.2 732.2,470.0 727.6,472.7" fill="#dfbe5c" stroke="#000" stroke-width="0.9" stroke-linejoin="round" />
<polygon points="732.8,453.9 737.2,455.2 737.2,470.4 732.8,469.1" fill="#a08538" stroke="#000" stroke-width="0.9" stroke-linejoin="round" />
<polygon points="737.2,455.2 744.7,450.7 744.7,465.9 737.2,470.4" fill="#dfbe5c" stroke="#000" stroke-width="0.9" stroke-linejoin="round" />
<polygon points="732.8,453.9 737.2,455.2 744.7,450.7 740.3,449.4" fill="#f1d566" stroke="#000" stroke-width="0.9" stroke-linejoin="round" />
<rect x="742.7" y="459.8" width="2.2" height="2.6" fill="#000"/>
<polygon points="727.6,399.4 732.2,396.7 732.2,410.5 727.6,413.2" fill="#dfbe5c" stroke="#000" stroke-width="0.9" stroke-linejoin="round" />
<polygon points="732.8,394.4 737.2,395.7 737.2,410.9 732.8,409.6" fill="#a08538" stroke="#000" stroke-width="0.9" stroke-linejoin="round" />
<polygon points="737.2,395.7 744.7,391.2 744.7,406.4 737.2,410.9" fill="#dfbe5c" stroke="#000" stroke-width="0.9" stroke-linejoin="round" />
<polygon points="732.8,394.4 737.2,395.7 744.7,391.2 740.3,389.9" fill="#f1d566" stroke="#000" stroke-width="0.9" stroke-linejoin="round" />
<rect x="742.7" y="400.3" width="2.2" height="2.6" fill="#000"/>
<rect x="725.3" y="389.3" width="2.6" height="89.0" fill="#4a3a10" shape-rendering="auto"/><rect x="726.2" y="389.3" width="1.7" height="88.6" fill="#c6a242" shape-rendering="auto"/>
<polygon points="783.4,428.7 785.0,427.7 785.0,441.7 783.4,442.7" fill="#2a2008" stroke="#000" stroke-width="0.6" stroke-linejoin="round" />
<polygon points="771.5,430.7 775.9,432.0 775.9,447.2 771.5,445.9" fill="#a08538" stroke="#000" stroke-width="0.9" stroke-linejoin="round" />
<polygon points="775.9,432.0 783.4,427.5 783.4,442.7 775.9,447.2" fill="#dfbe5c" stroke="#000" stroke-width="0.9" stroke-linejoin="round" />
<polygon points="771.5,430.7 775.9,432.0 783.4,427.5 779.0,426.2" fill="#f1d566" stroke="#000" stroke-width="0.9" stroke-linejoin="round" />
<rect x="776.7" y="438.6" width="1.8" height="2.6" fill="#000"/>
<polygon points="787.0,423.3 791.6,420.6 791.6,434.4 787.0,437.1" fill="#dfbe5c" stroke="#000" stroke-width="0.9" stroke-linejoin="round" />
<polygon points="792.2,418.3 796.6,419.6 796.6,434.8 792.2,433.5" fill="#a08538" stroke="#000" stroke-width="0.9" stroke-linejoin="round" />
<polygon points="796.6,419.6 804.1,415.1 804.1,430.3 796.6,434.8" fill="#dfbe5c" stroke="#000" stroke-width="0.9" stroke-linejoin="round" />
<polygon points="792.2,418.3 796.6,419.6 804.1,415.1 799.7,413.8" fill="#f1d566" stroke="#000" stroke-width="0.9" stroke-linejoin="round" />
<rect x="802.1" y="424.2" width="2.2" height="2.6" fill="#000"/>
<polygon points="783.4,369.2 785.0,368.2 785.0,382.2 783.4,383.2" fill="#2a2008" stroke="#000" stroke-width="0.6" stroke-linejoin="round" />
<polygon points="771.5,371.2 775.9,372.5 775.9,387.7 771.5,386.4" fill="#a08538" stroke="#000" stroke-width="0.9" stroke-linejoin="round" />
<polygon points="775.9,372.5 783.4,368.0 783.4,383.2 775.9,387.7" fill="#dfbe5c" stroke="#000" stroke-width="0.9" stroke-linejoin="round" />
<polygon points="771.5,371.2 775.9,372.5 783.4,368.0 779.0,366.7" fill="#f1d566" stroke="#000" stroke-width="0.9" stroke-linejoin="round" />
<rect x="776.7" y="379.1" width="1.8" height="2.6" fill="#000"/>
<polygon points="787.0,363.8 791.6,361.1 791.6,374.9 787.0,377.6" fill="#dfbe5c" stroke="#000" stroke-width="0.9" stroke-linejoin="round" />
<polygon points="792.2,358.8 796.6,360.1 796.6,375.3 792.2,374.0" fill="#a08538" stroke="#000" stroke-width="0.9" stroke-linejoin="round" />
<polygon points="796.6,360.1 804.1,355.6 804.1,370.8 796.6,375.3" fill="#dfbe5c" stroke="#000" stroke-width="0.9" stroke-linejoin="round" />
<polygon points="792.2,358.8 796.6,360.1 804.1,355.6 799.7,354.3" fill="#f1d566" stroke="#000" stroke-width="0.9" stroke-linejoin="round" />
<rect x="802.1" y="364.7" width="2.2" height="2.6" fill="#000"/>
<rect x="784.7" y="353.7" width="2.6" height="89.0" fill="#4a3a10" shape-rendering="auto"/><rect x="785.6" y="353.7" width="1.7" height="88.6" fill="#c6a242" shape-rendering="auto"/>
<polygon points="842.8,393.0 844.4,392.0 844.4,406.0 842.8,407.0" fill="#2a2008" stroke="#000" stroke-width="0.6" stroke-linejoin="round" />
<polygon points="830.9,395.0 835.3,396.3 835.3,411.5 830.9,410.2" fill="#a08538" stroke="#000" stroke-width="0.9" stroke-linejoin="round" />
<polygon points="835.3,396.3 842.8,391.8 842.8,407.0 835.3,411.5" fill="#dfbe5c" stroke="#000" stroke-width="0.9" stroke-linejoin="round" />
<polygon points="830.9,395.0 835.3,396.3 842.8,391.8 838.4,390.5" fill="#f1d566" stroke="#000" stroke-width="0.9" stroke-linejoin="round" />
<rect x="836.1" y="402.9" width="1.8" height="2.6" fill="#000"/>
<polygon points="846.4,387.6 851.0,384.9 851.0,398.7 846.4,401.4" fill="#dfbe5c" stroke="#000" stroke-width="0.9" stroke-linejoin="round" />
<polygon points="851.6,382.6 856.0,383.9 856.0,399.1 851.6,397.8" fill="#a08538" stroke="#000" stroke-width="0.9" stroke-linejoin="round" />
<polygon points="856.0,383.9 863.5,379.4 863.5,394.6 856.0,399.1" fill="#dfbe5c" stroke="#000" stroke-width="0.9" stroke-linejoin="round" />
<polygon points="851.6,382.6 856.0,383.9 863.5,379.4 859.1,378.1" fill="#f1d566" stroke="#000" stroke-width="0.9" stroke-linejoin="round" />
<rect x="861.5" y="388.5" width="2.2" height="2.6" fill="#000"/>
<polygon points="842.8,333.5 844.4,332.5 844.4,346.5 842.8,347.5" fill="#2a2008" stroke="#000" stroke-width="0.6" stroke-linejoin="round" />
<polygon points="830.9,335.5 835.3,336.8 835.3,352.0 830.9,350.7" fill="#a08538" stroke="#000" stroke-width="0.9" stroke-linejoin="round" />
<polygon points="835.3,336.8 842.8,332.3 842.8,347.5 835.3,352.0" fill="#dfbe5c" stroke="#000" stroke-width="0.9" stroke-linejoin="round" />
<polygon points="830.9,335.5 835.3,336.8 842.8,332.3 838.4,331.0" fill="#f1d566" stroke="#000" stroke-width="0.9" stroke-linejoin="round" />
<rect x="836.1" y="343.4" width="1.8" height="2.6" fill="#000"/>
<polygon points="846.4,328.1 851.0,325.4 851.0,339.2 846.4,341.9" fill="#dfbe5c" stroke="#000" stroke-width="0.9" stroke-linejoin="round" />
<polygon points="851.6,323.1 856.0,324.4 856.0,339.6 851.6,338.3" fill="#a08538" stroke="#000" stroke-width="0.9" stroke-linejoin="round" />
<polygon points="856.0,324.4 863.5,319.9 863.5,335.1 856.0,339.6" fill="#dfbe5c" stroke="#000" stroke-width="0.9" stroke-linejoin="round" />
<polygon points="851.6,323.1 856.0,324.4 863.5,319.9 859.1,318.6" fill="#f1d566" stroke="#000" stroke-width="0.9" stroke-linejoin="round" />
<rect x="861.5" y="329.0" width="2.2" height="2.6" fill="#000"/>
<rect x="844.1" y="318.0" width="2.6" height="89.0" fill="#4a3a10" shape-rendering="auto"/><rect x="845.0" y="318.0" width="1.7" height="88.6" fill="#c6a242" shape-rendering="auto"/>
<polygon points="902.2,357.4 903.8,356.4 903.8,370.4 902.2,371.4" fill="#2a2008" stroke="#000" stroke-width="0.6" stroke-linejoin="round" />
<polygon points="890.3,359.4 894.7,360.7 894.7,375.9 890.3,374.6" fill="#a08538" stroke="#000" stroke-width="0.9" stroke-linejoin="round" />
<polygon points="894.7,360.7 902.2,356.2 902.2,371.4 894.7,375.9" fill="#dfbe5c" stroke="#000" stroke-width="0.9" stroke-linejoin="round" />
<polygon points="890.3,359.4 894.7,360.7 902.2,356.2 897.8,354.9" fill="#f1d566" stroke="#000" stroke-width="0.9" stroke-linejoin="round" />
<rect x="895.5" y="367.3" width="1.8" height="2.6" fill="#000"/>
<polygon points="905.8,352.0 910.4,349.3 910.4,363.1 905.8,365.8" fill="#dfbe5c" stroke="#000" stroke-width="0.9" stroke-linejoin="round" />
<polygon points="911.0,347.0 915.4,348.3 915.4,363.5 911.0,362.2" fill="#a08538" stroke="#000" stroke-width="0.9" stroke-linejoin="round" />
<polygon points="915.4,348.3 922.9,343.8 922.9,359.0 915.4,363.5" fill="#dfbe5c" stroke="#000" stroke-width="0.9" stroke-linejoin="round" />
<polygon points="911.0,347.0 915.4,348.3 922.9,343.8 918.5,342.5" fill="#f1d566" stroke="#000" stroke-width="0.9" stroke-linejoin="round" />
<rect x="920.9" y="352.9" width="2.2" height="2.6" fill="#000"/>
<polygon points="902.2,297.9 903.8,296.9 903.8,310.9 902.2,311.9" fill="#2a2008" stroke="#000" stroke-width="0.6" stroke-linejoin="round" />
<polygon points="890.3,299.9 894.7,301.2 894.7,316.4 890.3,315.1" fill="#a08538" stroke="#000" stroke-width="0.9" stroke-linejoin="round" />
<polygon points="894.7,301.2 902.2,296.7 902.2,311.9 894.7,316.4" fill="#dfbe5c" stroke="#000" stroke-width="0.9" stroke-linejoin="round" />
<polygon points="890.3,299.9 894.7,301.2 902.2,296.7 897.8,295.4" fill="#f1d566" stroke="#000" stroke-width="0.9" stroke-linejoin="round" />
<rect x="895.5" y="307.8" width="1.8" height="2.6" fill="#000"/>
<polygon points="905.8,292.5 910.4,289.8 910.4,303.6 905.8,306.3" fill="#dfbe5c" stroke="#000" stroke-width="0.9" stroke-linejoin="round" />
<polygon points="911.0,287.5 915.4,288.8 915.4,304.0 911.0,302.7" fill="#a08538" stroke="#000" stroke-width="0.9" stroke-linejoin="round" />
<polygon points="915.4,288.8 922.9,284.3 922.9,299.5 915.4,304.0" fill="#dfbe5c" stroke="#000" stroke-width="0.9" stroke-linejoin="round" />
<polygon points="911.0,287.5 915.4,288.8 922.9,284.3 918.5,283.0" fill="#f1d566" stroke="#000" stroke-width="0.9" stroke-linejoin="round" />
<rect x="920.9" y="293.4" width="2.2" height="2.6" fill="#000"/>
<rect x="903.5" y="282.4" width="2.6" height="89.0" fill="#4a3a10" shape-rendering="auto"/><rect x="904.4" y="282.4" width="1.7" height="88.6" fill="#c6a242" shape-rendering="auto"/>
<polygon points="961.6,321.7 963.2,320.7 963.2,334.7 961.6,335.7" fill="#2a2008" stroke="#000" stroke-width="0.6" stroke-linejoin="round" />
<polygon points="949.7,323.7 954.1,325.0 954.1,340.2 949.7,338.9" fill="#a08538" stroke="#000" stroke-width="0.9" stroke-linejoin="round" />
<polygon points="954.1,325.0 961.6,320.5 961.6,335.7 954.1,340.2" fill="#dfbe5c" stroke="#000" stroke-width="0.9" stroke-linejoin="round" />
<polygon points="949.7,323.7 954.1,325.0 961.6,320.5 957.2,319.2" fill="#f1d566" stroke="#000" stroke-width="0.9" stroke-linejoin="round" />
<rect x="954.9" y="331.6" width="1.8" height="2.6" fill="#000"/>
<polygon points="961.6,262.2 963.2,261.2 963.2,275.2 961.6,276.2" fill="#2a2008" stroke="#000" stroke-width="0.6" stroke-linejoin="round" />
<polygon points="949.7,264.2 954.1,265.5 954.1,280.7 949.7,279.4" fill="#a08538" stroke="#000" stroke-width="0.9" stroke-linejoin="round" />
<polygon points="954.1,265.5 961.6,261.0 961.6,276.2 954.1,280.7" fill="#dfbe5c" stroke="#000" stroke-width="0.9" stroke-linejoin="round" />
<polygon points="949.7,264.2 954.1,265.5 961.6,261.0 957.2,259.7" fill="#f1d566" stroke="#000" stroke-width="0.9" stroke-linejoin="round" />
<rect x="954.9" y="272.1" width="1.8" height="2.6" fill="#000"/>
<rect x="962.9" y="246.7" width="2.6" height="89.0" fill="#4a3a10" shape-rendering="auto"/><rect x="963.8" y="246.7" width="1.7" height="88.6" fill="#c6a242" shape-rendering="auto"/>
<polygon points="735.1,486.4 993.6,331.3 993.6,311.3 735.1,466.4" fill="#dfbe5c" stroke="#000" stroke-width="0.9" stroke-linejoin="round" />
<polygon points="728.3,464.4 980.8,312.9 993.6,311.3 735.1,466.4" fill="#f1d566" stroke="#000" stroke-width="0.9" stroke-linejoin="round" />
<polygon points="728.3,484.4 735.1,486.4 735.1,466.4 728.3,464.4" fill="#a08538" stroke="#000" stroke-width="0.9" stroke-linejoin="round" />
<rect x="725.3" y="389.3" width="2.6" height="97.0" fill="#4a3a10" shape-rendering="auto"/><rect x="726.2" y="389.3" width="1.7" height="96.6" fill="#c6a242" shape-rendering="auto"/>
<polygon points="470.4,302.8 713.8,156.8 980.5,234.3 720.0,391.0 720.0,392.6 980.5,236.7 713.8,159.5 470.4,305.5" fill="#e2c463" stroke="#000" stroke-width="1.0" stroke-linejoin="round" />
</g></svg>
</body></html>
